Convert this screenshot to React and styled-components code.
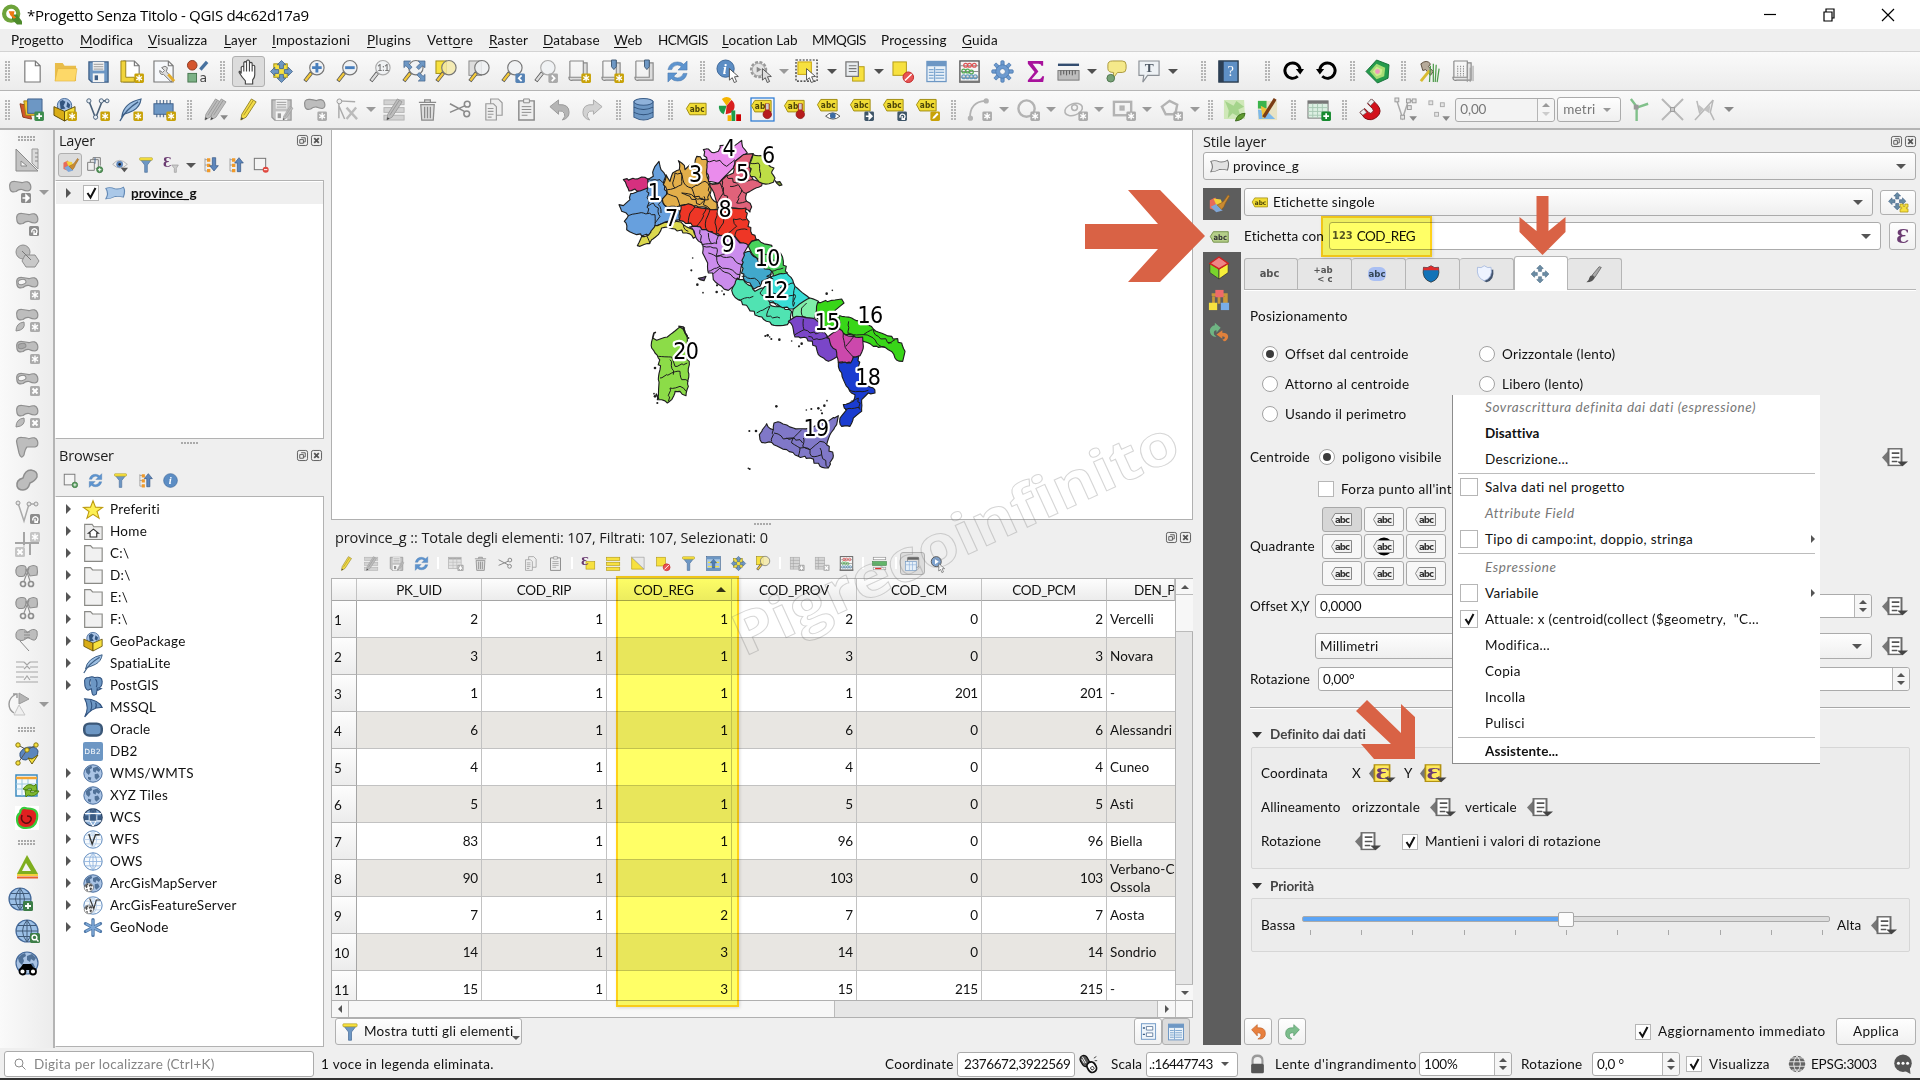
import React from "react";
import styled, { createGlobalStyle, css } from "styled-components";

const Global = createGlobalStyle`
  * { box-sizing: border-box; }
  html, body { margin: 0; padding: 0; background: #f0f0f0; }
  body { font: 13.5px/1.2 Lato, "Noto Sans", sans-serif; color: #111; overflow: hidden; }
  svg { display: block; flex: none; overflow: visible; }
`;

/* ---------- icons ---------- */
const BLUE = "#6d97c4";
const DBLUE = "#415a75";

const Badge = ({ x = 15, y = 14, c = "#c8a208", k = "star" }) => (
  <g transform={`translate(${x} ${y})`}>
    <rect width="10" height="10" rx="1.5" fill={c} />
    {k === "star" && <path d="M5 1.5v7M2 3.2l6 3.6M8 3.2L2 6.8" stroke="#fff" strokeWidth="1.4" />}
    {k === "plus" && <path d="M5 2v6M2 5h6" stroke="#fff" strokeWidth="1.8" />}
    {k === "x" && <path d="M2.5 2.5l5 5M7.5 2.5l-5 5" stroke="#fff" strokeWidth="2" />}
    {k === "right" && <path d="M1.5 5h4M5 2l3 3-3 3z" stroke="#fff" strokeWidth="1.5" fill="#fff" />}
    {k === "lt" && <path d="M6.5 2L3.5 5l3 3" stroke="#fff" strokeWidth="1.8" fill="none" />}
    {k === "gt" && <path d="M3.5 2l3 3-3 3" stroke="#fff" strokeWidth="1.8" fill="none" />}
    {k === "rot" && <path d="M3 6.5A2.6 2.6 0 1 1 5.2 8M5 4.8v3.4h3" stroke="#fff" strokeWidth="1.4" fill="none" />}
    {k === "find" && <path d="M6.600 6.600L8.500 8.500M4.500 2a2.400 2.400 0 1 1 0 4.800 2.400 2.400 0 0 1 0-4.800" stroke="#fff" strokeWidth="1.4" fill="none" />}
    {k === "pen" && <path d="M2 8l1-2.5L7 1.5l1.5 1.5-4 4z" fill="#fff" />}
  </g>
);
const Mag = ({ grey, glass = "#eef1f3" }) => (
  <g>
    <path d="M9 13l-7 9" stroke="#555" strokeWidth="4" />
    <path d="M8.5 13.8l-6 7.6" stroke={grey ? "#ddd" : "#f3c93b"} strokeWidth="2.4" />
    <circle cx="14.5" cy="8" r="7.5" fill={glass} fillOpacity=".85" stroke={grey ? "#aaa" : "#777"} strokeWidth="1.2" />
  </g>
);
const Pencil = ({ grey }) => (
  <g>
    <path d="M5 17L15 1l5 3L9.500 20 4 23z" fill={grey ? "#bcbcbc" : "#f3dc47"} stroke={grey ? "#999" : "#8c7b1f"} strokeWidth=".9" />
    <path d="M7 18L17 2.500" stroke={grey ? "#999" : "#a99425"} strokeWidth="1" />
    <path d="M4 23l.6-3 2.200 1.500z" fill="#444" />
  </g>
);
const Blob = ({ f = "#bdbdbd", s = "#8e8e8e", hole }) => (
  <g>
    <path d="M2 9Q0 1 7 1.500q4 .5 7 1.200Q21 0 22.500 5t-2.500 6q-3 0-6-1.500-3-.5-6 2Q3 13 2 9z" fill={f} stroke={s} strokeWidth="1.200" />
    {hole && <ellipse cx="7" cy="6" rx="4" ry="2.600" fill={hole} stroke={s} transform="rotate(-12 7 6)" />}
  </g>
);
const Tag = ({ y = 2, f = "#f1dc35", s = "#a08c10", t = "#4b4308" }) => (
  <g>
    <path d={`M.5 ${y + 6}L4 ${y + 0.5}H21v12H4z`} fill={f} stroke={s} strokeWidth="1" />
    <text x="4" y={y + 9.500} fontSize="8.600" fontWeight="700" fill={t} fontFamily="DejaVu Sans Condensed, DejaVu Sans, sans-serif" textLength="15.500">abc</text>
  </g>
);
const Globe = ({ f = "#a9c3e4", s = "#44699a", land = true, cls = "#33557f" }) => (
  <g>
    <circle cx="12" cy="12" r="11" fill={f} stroke={s} strokeWidth="1.200" />
    {land ? (
      <path d="M3 7q3-4 7-5l1 3-3 2 1 3-2 4-3-3-1-4zm9-2l5-2 4 4-2 3-3-2-1 3-3-2zm2 8l4-1 2 4-4 4-2-3zM6 16l4 1-1 4-3-2z" fill={cls} opacity=".75" />
    ) : (
      <path d="M1 12h22M3 6.500h18M3 17.500h18M12 1v22M12 1q-9 11 0 22M12 1q9 11 0 22" stroke={cls} fill="none" strokeWidth="1" />
    )}
  </g>
);
const Funnel = () => (
  <g>
    <path d="M3 3h18l-7 9v11h-4V12z" fill={BLUE} stroke="#4d709b" />
    <rect x="2.500" y="1" width="19" height="4" rx="1" fill="#f7e13f" stroke="#a08c10" strokeWidth=".7" />
  </g>
);
const Refresh = ({ c = "#5d94cf" }) => (
  <g fill={c} stroke="#3e6ea5" strokeWidth=".5">
    <path d="M2 10Q4 2 12 2q4 0 6.500 2.500L22 1v9.500h-9.500l3.500-3.500q-2-2-4.500-1.700Q7 6 6 10z" />
    <path d="M22 14q-2 8-10 8-4 0-6.500-2.500L2 23v-9.500h9.500L8 17q2 2 4.500 1.700Q17 18 18 14z" />
  </g>
);
const Page = ({ s = "#777", f = "#fff" }) => <path d="M4 1h11l5 5v17H4zM15 1v5h5" fill={f} stroke={s} strokeWidth="1.200" />;
const Cursor = ({ x = 11, y = 9, f = "#fff" }) => (
  <path transform={`translate(${x} ${y})`} d="M0 0v12l3-2.500 2 5 2.500-1-2.200-5 4-.3z" fill={f} stroke="#444" strokeWidth=".9" />
);
const Ruled = ({ s = "#888", f = "#dcdcdc" }) => (
  <path d="M3 1h14v2h4v18H6q-4 1-4-3h15V1M3 1v17" fill={f} stroke={s} strokeWidth="1.200" />
);
const Scissors = ({ c = "#8a8a8a" }) => (
  <g stroke={c} fill="none" strokeWidth="1.600">
    <path d="M1 6l15 8M1 15l16-7" />
    <circle cx="19" cy="6.500" r="3" /><circle cx="18.500" cy="16.500" r="3" />
  </g>
);
const Trash = ({ c = "#8a8a8a" }) => (
  <g stroke={c} fill="#ddd" strokeWidth="1.300">
    <path d="M5 7h14l-1 16H6zM3 4.500h18M9 4V2h6v2" /><path d="M9 9v12M12 9v12M15 9v12" />
  </g>
);
const Copy = ({ c = "#999" }) => (
  <g fill="#eee" stroke={c} strokeWidth="1.200">
    <path d="M9 1h8l4 4v13H9z" /><path d="M4 6h8l3 3v14H4zM6 11h6M6 14h6M6 17h6M6 20h4" />
  </g>
);
const Paste = ({ c = "#8a8a8a" }) => (
  <g fill="#eee" stroke={c} strokeWidth="1.500">
    <path d="M4 3h16v20H4z" /><path d="M9 1h6v4H9zM7 9h10M7 12h10M7 15h10M7 18h6" strokeWidth="1" />
  </g>
);
const Rows = ({ c = "#d2d2d2", s = "#b4b4b4" }) => (
  <g fill={c} stroke={s}><rect x="1" y="2" width="21" height="5" /><rect x="1" y="10" width="21" height="5" /><rect x="1" y="18" width="21" height="5" /></g>
);
const Floppy = ({ c = BLUE, s = "#3e5f86" }) => (
  <g>
    <path d="M2 2h20v21H5l-3-3z" fill={c} stroke={s} strokeWidth="1.300" />
    <rect x="6" y="2" width="12" height="9" fill="#f0f0f0" /><path d="M7 4.500h10M7 7h10M7 9.500h10" stroke="#999" />
    <rect x="6" y="14" width="12" height="9" fill="#f4f4f4" /><rect x="8" y="16" width="3.500" height="5" fill={s} />
  </g>
);
const Arrows4 = ({ c = BLUE }) => (
  <g fill={c} stroke="#3f5f86" strokeWidth=".8">
    {[0, 90, 180, 270].map((a) => <path key={a} transform={`rotate(${a} 12 12)`} d="M12 .5l4.500 4.500h-2.500v4h-4V5H7.500z" />)}
  </g>
);
const GreyStar = <Badge c="#ababab" />;
const Cut = () => (
  <g fill="#bdbdbd" stroke="#8e8e8e" strokeWidth="1.100">
    <path d="M1 9Q0 2 6 1.500T11 6q0 4-2 6-7 2-8-3zM14 3q5-3 8 0 1 5 0 8l-7 1-3-6z" />
    <path d="M9 17L14 4M15 17L11 5" /><circle cx="8" cy="20" r="2.500" fill="none" strokeWidth="1.700" /><circle cx="16" cy="20" r="2.500" fill="none" strokeWidth="1.700" />
  </g>
);
const Elbow = ({ children }) => <g fill="none" stroke="#b3b3b3" strokeWidth="2.500">{children}{<g stroke="none">{GreyStar}</g>}</g>;
const PkgBox = () => (
  <g><circle cx="12" cy="8" r="7.500" fill="#a9c3e4" stroke="#44699a" /><path d="M7 4l3-2 3 2-2 4 2 3-5 1zM15 4l3 3-1 4-3-2z" fill="#33557f" /><path d="M1 9l11 5v10L1 18z" fill="#d9ad16" stroke="#5e4b08" /><path d="M23 9l-11 5v10l11-6z" fill="#f7e13f" stroke="#5e4b08" /></g>
);
const Quill = () => (
  <g><path d="M3 19Q5 5 23 1q-1 8-8 12-6 3-10 4z" fill="#9dbfe2" stroke="#3d5f86" strokeWidth="1.200" /><path d="M1 24Q7 12 20 4" fill="none" stroke="#3d5f86" strokeWidth="1.400" /></g>
);
const Pin = () => (
  <g><path d="M15 6v7a4.500 4.500 0 1 0 4 0V6z" fill="#b71c1c" stroke="#7a1010" strokeWidth=".6" /><path d="M15.500 6h3v6h-3z" fill="#ccc" /></g>
);
const Eps = ({ x, y, size }) => <text x={x} y={y} fontSize={size} fontWeight="700" fontFamily="DejaVu Serif, serif" fill="#6b3c72">Ɛ</text>;

const ICONS = {
  newFile: <Page />,
  open: <><path d="M1 3h8l2 3h12v16H1z" fill="#e9bd4a" /><path d="M4 9h20l-2 13H1z" fill="#fdd868" stroke="#e0b13a" strokeWidth=".6" /></>,
  save: <Floppy />,
  layout: <><Page /><path d="M4 1H1v22h14v-5H6V1z" fill="#f1d43c" stroke="#9c8415" /><Badge /></>,
  layouts: <><path d="M1 1h15l5 5v17H1zM16 1v5h5" fill="#f6f8fb" stroke="#777" strokeWidth="1.200" /><path d="M9 8q4-3 6 0l-1 4 7 8-2 3-8-8q-4 1-4-4l3 2 2-2z" fill="#ddd" stroke="#777" /><path d="M16 15l6 7" stroke="#e4ad2b" strokeWidth="3" /></>,
  style: <><circle cx="6.500" cy="5.500" r="5" fill="#d4552d" stroke="#8d3a20" /><path d="M15 10L22 2" stroke="#47719f" strokeWidth="3.500" /><rect x="2" y="14" width="9" height="9" fill="#7cb286" stroke="#47764f" /><text x="14" y="23" fontSize="13" fill="#444" fontFamily="DejaVu Sans">a</text></>,
  hand: <path d="M5 14V8q1.500-2 2.500 0V3.500q1.300-2 2.600 0V2q1.500-2 2.800 0v2q1.500-1.600 2.600 0v2.500q2-1.200 2.500.5v8q0 3-2 5v4H9v-3q-3-3-6-8 0-3 2 1zM7.500 8v4M10.100 4v8M12.900 3v9M15.500 6v6" fill="#fff" stroke="#444" strokeWidth="1.100" />,
  panSel: <><rect x="4" y="4" width="14" height="14" fill="#f7e13f" stroke="#a08c10" /><Arrows4 /></>,
  zin: <><Mag /><path d="M14.500 3v10M9.500 8h10" stroke="#487fbd" strokeWidth="3" /></>,
  zout: <><Mag /><path d="M9.500 8h10" stroke="#487fbd" strokeWidth="3" /></>,
  z11: <><Mag grey /><text x="8.500" y="11.500" fontSize="9" fontWeight="700" fill="#777">1:1</text></>,
  zfull: <><Mag /><g fill={BLUE} stroke="#3f5f86" strokeWidth=".7"><path d="M2 1h7L6.500 3.500l4 4-2.500 2.500-4-4L2 8zM24 1v7l-2.500-2-4 4L15 7.500l4-4L17 1zM24 22h-7l2.500-2.500-4-4 2.500-2.500 4 4L24 15z" /></g></>,
  zsel: <><rect x="1" y="1" width="11" height="13" fill="#f7e13f" stroke="#a08c10" /><Mag glass="#f3e9a8" /></>,
  zlayer: <><rect x="1" y="1" width="13" height="15" fill="#ddd" stroke="#888" /><Mag /></>,
  zlast: <><Mag /><Badge c="#5683b5" k="lt" /></>,
  znext: <><Mag grey /><Badge c="#aaa" k="gt" /></>,
  newMap: <><Ruled /><Badge /></>,
  newBook: <><Ruled /><path d="M12 0h5v7l-2.500 3L12 7z" fill={BLUE} stroke={DBLUE} /><Badge /></>,
  showBook: <><Ruled /><path d="M12 0h5v7l-2.500 3L12 7z" fill={BLUE} stroke={DBLUE} /></>,
  refresh: <Refresh />,
  info: <><circle cx="10" cy="9" r="9" fill="#5c8dc4" stroke="#3b6596" /><text x="7" y="14.500" fontSize="15" fontStyle="italic" fontWeight="700" fontFamily="Liberation Serif" fill="#fff">i</text><Cursor x="14" /></>,
  action: <><circle cx="10" cy="10" r="7.500" fill="#ddd" stroke="#999" strokeWidth="3" strokeDasharray="3 1.500" /><circle cx="10" cy="10" r="6.500" fill="#e4e4e4" stroke="#aaa" /><path d="M8 7l5 3-5 3z" fill="#888" /><Cursor x="14" f="#ddd" /></>,
  select: <><rect x="0" y="0" width="22" height="22" fill="none" stroke="#222" strokeDasharray="2 1.500" strokeWidth="1.200" /><rect x="2" y="2" width="14" height="13" fill="#f7e13f" stroke="#c8a208" /><Cursor x="11" y="9" /></>,
  selForm: <><rect x="9" y="7" width="12" height="15" fill="#f7e13f" stroke="#b39a14" /><path d="M2 2h13v15H2zM5 6h8M5 9h8M5 12h8" fill="#e8ecef" stroke="#777" strokeWidth="1.300" /></>,
  desel: <><rect x="1" y="2" width="14" height="14" fill="#f7e13f" stroke="#b39a14" /><circle cx="17" cy="18" r="5.500" fill="#e85454" stroke="#c02525" /><path d="M13.500 21.500l7-7" stroke="#fff" strokeWidth="1.500" /></>,
  table: <><rect x="2" y="1.500" width="20" height="21" fill="#e9f1f8" stroke="#6d97c4" strokeWidth="1.300" /><rect x="2" y="1.500" width="20" height="5" fill={BLUE} /><path d="M4 10h5M4 13h5M4 16h5M4 19h5M11 10h9M11 13h9M11 16h9M11 19h9M10 7v15" stroke="#7fa8d0" strokeWidth="1.300" /></>,
  abacus: <><rect x="2" y="1" width="20" height="22" fill="#f6f6f6" stroke="#555" strokeWidth="1.400" /><path d="M2 6h20M2 12h20M2 18h20" stroke="#888" />{[[8, 5, "#d55"], [12, 5, "#d55"], [17, 5, "#d55"], [6, 11, "#5a5"], [10, 11, "#5a5"], [14, 12, "#5a5"], [6, 17, "#69b"], [10, 17, "#69b"], [14, 17, "#69b"], [18, 17, "#69b"]].map(([x, y, c], i) => <circle key={i} cx={x} cy={y + 0.5} r="2" fill="none" stroke={c} strokeWidth="1.300" />)}<path d="M1 22.500h22" stroke="#777" strokeWidth="2" /></>,
  gear: <g fill="#6d9bd0" stroke="#4a78ae" strokeWidth=".8">{[0, 45, 90, 135, 180, 225, 270, 315].map((a) => <rect key={a} x="10.300" y=".8" width="3.400" height="6" rx="1" transform={`rotate(${a} 12 12)`} />)}<circle cx="12" cy="12" r="7" /><circle cx="12" cy="12" r="3" fill="#f6f6f6" /></g>,
  sigma: <path d="M4 1h16v5h-2q0-2-3-2H9l6 8-7 8h7q3 0 4-3h2l-1 6H4v-2l7-8.500L4 4z" fill="#a8129c" />,
  ruler: <><path d="M1 5h22" stroke="#334d70" strokeWidth="2.500" /><rect x="1" y="11" width="22" height="10" fill="#bdbdbd" stroke="#777" /><path d="M4 11v5M7 11v4M10 11v5M13 11v4M16 11v5M19 11v4" stroke="#555" /></>,
  tip: <><path d="M8 1h10q4 0 4 4v4q0 4-4 4h-5l-5 7 1-7Q3 13 3 9V5q0-4 5-4z" fill="#f5e98a" stroke="#a9983d" /><circle cx="6" cy="19" r="4" fill="#76a176" stroke="#4e754e" /></>,
  textNote: <><path d="M1 1h21v15H10l-5 7 1-7H1z" fill="#eef2f5" stroke="#8a8f95" strokeWidth="1.200" /><text x="7" y="13" fontSize="14" fontWeight="700" fontFamily="Liberation Serif" fill="#4a5560">T</text></>,
  help: <><rect x="2" y="1" width="20" height="22" fill="#5e8fc4" stroke="#26384b" strokeWidth="1.400" /><rect x="2" y="1" width="5" height="22" fill="#2c3f54" /><text x="11" y="17" fontSize="15" fontFamily="Liberation Serif" fill="#fff">?</text></>,
  redo: <><path d="M17.500 17A8 8 0 1 1 20 10" fill="none" stroke="#000" strokeWidth="3" /><path d="M15.500 9.500H24L20 15z" /></>,
  undo: <><path d="M6.500 17A8 8 0 1 0 4 10" fill="none" stroke="#000" strokeWidth="3" /><path d="M8.500 9.500H0L4 15z" /></>,
  penta: <><path d="M11 0l13 5-1 14-11 5L0 12z" fill="#259b4c" stroke="#17713a" /><path d="M11 4l9 4-1 9-8 3-7-8z" fill="#a6dc75" /><path d="M11 7l6 3-1 5-5 2-4-5z" fill="#cdec8e" /><circle cx="12" cy="12" r="2.500" fill="#f09ac0" /></>,
  hammer: <><path d="M3 4q6-5 10 0l-2 3 5 5-3 4-5-6-3 1z" fill="#b6aa9a" stroke="#5b4c3c" /><path d="M3 22L12 11" stroke="#d8bb2f" strokeWidth="3" /><path d="M13 6l-1 17M16 4l0 19M19 5l-1 18M22 9l-2 14" stroke="#4e9b4b" strokeWidth="1.300" /></>,
  scroll: <><Ruled f="#e4e4e4" /><path d="M7 6v11M10 6v11M13 6v11" stroke="#888" strokeDasharray="1.500 1" /><path d="M17 5v18M20 8v15M23 6v16" stroke="#999" /></>,
  /* second bar */
  dsm: <><path d="M0 6l9 2 3 14-9-2z" fill="#d1562a" stroke="#8b3a1b" /><path d="M4 3h12v15H6z" fill="#f0c22e" stroke="#a08212" /><path d="M8 1h15v15H8z" fill={BLUE} stroke="#41618b" /><Badge c="#3e8d4e" k="plus" /></>,
  gpkg: <PkgBox />,
  gpkgNew: <><PkgBox /><Badge /></>,
  shp: <><path d="M3 3l7 18L17 3h4" fill="none" stroke="#4a6078" strokeWidth="1.600" /><g fill="#e6edf4" stroke="#4a6078"><circle cx="3" cy="3" r="2.200" /><circle cx="10" cy="20" r="2.200" /><circle cx="16" cy="3" r="2.200" /><circle cx="22" cy="3" r="2" /></g><Badge /></>,
  feather: <Quill />,
  featherNew: <><Quill /><Badge /></>,
  mem: <><path d="M5 2v18M8.500 2v18M12 2v18M15.500 2v18M19 2v18" stroke="#5c7796" strokeWidth="1.300" /><rect x="2" y="6" width="20" height="11" fill="#6d97c4" stroke="#41618b" /><Badge /></>,
  pens: <><g transform="translate(-3 0)"><Pencil grey /></g><g transform="translate(3 0)"><Pencil grey /></g><path d="M17 18h8l-4 5z" fill="#888" /></>,
  pencil: <Pencil />,
  saveEdit: <><Floppy c="#c2c2c2" s="#999" /><g transform="translate(11 8) scale(.65)"><Pencil grey /></g></>,
  addPoly: <><Blob />{GreyStar}</>,
  vertex: <><path d="M3 3v18M3 3l17 1M3 8l6 14" stroke="#aaa" strokeWidth="1.500" fill="none" /><circle cx="3.500" cy="3.500" r="2.500" fill="#eee" stroke="#999" /><path d="M11 10l11 12M21 10L11 22" stroke="#bbb" strokeWidth="2.500" /></>,
  multiEdit: <><Rows /><Pencil grey /></>,
  trash: <Trash />, cut: <Scissors />, copy: <Copy />, paste: <Paste />,
  undoG: <path d="M2 9l9-7v5q11-1 11 8 0 6-7 8 4-4 2-7-1-3-6-2.500V17z" fill="#b5b5b5" stroke="#999" />,
  redoG: <path d="M22 9l-9-7v5Q2 6 2 15q0 6 7 8-4-4-2-7 1-3 6-2.500V17z" fill="#d2d2d2" stroke="#aaa" />,
  db: <g fill="#6d97c4" stroke="#3c5f8a" strokeWidth="1.100"><path d="M2 4v16q10 6 20 0V4z" /><ellipse cx="12" cy="4" rx="10" ry="3.500" fill="#8fb2da" /><path d="M2 9.500q10 5 20 0M2 15q10 5 20 0" fill="none" stroke="#2f5079" /></g>,
  tag: <g transform="translate(1 3)"><Tag /></g>,
  diagram: <><path d="M9 8L1 8A8 8 0 0 0 6 17z" fill="#1d9c49" /><path d="M9 8L4 1a8 8 0 0 1 10 0z" fill="#f5b400" /><path d="M9 8l5-6a8 8 0 0 1-2 14l-4 1z" fill="#d81f1f" /><path d="M14 13h4v11h-4z" fill="#1d9c49" /><path d="M10 18h4v6h-4z" fill="#f5b400" /><path d="M19 17h5v7h-5z" fill="#c00" /></>,
  tagPinBox: <><rect x="0" y="0" width="24" height="24" fill="none" stroke="#2a7ad4" strokeWidth="1.300" /><Tag y={2} /><Pin /></>,
  tagPin: <><Tag y={2} /><Pin /></>,
  tagEye: <><Tag y={1} /><path d="M9 19q7-7 15 0-7 6-15 0z" fill="#fff" stroke="#555" /><circle cx="16.500" cy="18.500" r="3" fill="#3d6ba3" /></>,
  tagMove: <><Tag y={1} /><Badge c="#3e5568" k="right" /></>,
  tagRot: <><Tag y={1} /><Badge c="#3e5568" k="rot" /></>,
  tagEdit: <><Tag y={1} /><Badge k="pen" /></>,
  curve: <Elbow><path d="M2 21Q2 4 18 3" strokeWidth="1.800" /><circle cx="2.500" cy="21" r="1.500" /><circle cx="19" cy="3" r="1.500" /></Elbow>,
  circ: <Elbow><circle cx="11" cy="11" r="8.500" /></Elbow>,
  ellip: <Elbow><ellipse cx="10" cy="12" rx="9.500" ry="6" transform="rotate(-20 10 12)" strokeWidth="1.600" /><circle cx="11" cy="10" r="3" strokeWidth="1.600" /></Elbow>,
  rect: <Elbow><rect x="2" y="4" width="18" height="14" /><rect x="9" y="9" width="3" height="3" /></Elbow>,
  poly: <Elbow><path d="M3 9l8-6 8 4-2 10H7z" /></Elbow>,
  map1: <><path d="M1 2h21l1 20H1z" fill="#cfe8b8" /><path d="M2 3l9 5 3-5 8 6-6 3 3 9-9-5-5 5 1-8z" fill="#a5d48c" /><path d="M13 24q2-8 10-8-1 7-10 8z" fill="#5f9b2f" stroke="#3b6a1a" /></>,
  map2: <><path d="M2 3h20v20H2z" fill="#e8e3c4" /><path d="M2 3h9v8H2z" fill="#3bb44b" /><path d="M2 12l10 2 8 8H3z" fill="#7db9ea" /><path d="M5 8l9 5-7 9z" fill="#f0c23b" /><path d="M8 20L20 1" stroke="#7b3d14" strokeWidth="3.500" /></>,
  addTable: <><rect x="1" y="3" width="21" height="18" fill="#dcefe2" stroke="#777" /><rect x="1" y="3" width="21" height="3" fill="#777" /><path d="M1 10h21M1 14h21M1 18h21M6 6v15M11 6v15M16 6v15" stroke="#a8c9b4" /><Badge c="#168a2f" k="plus" /></>,
  magnet: <><path d="M13 1l6 6q6 7 0 12.500T6 21L1 15l5-4 4 4q2 2 4 0t0-4l-5-5z" fill="#d3121c" stroke="#7e0a10" /><path d="M13 1l3 3-4 4-3-3zM1 15l4-3.500 3 3.500L4 18z" fill="#eee" stroke="#666" strokeWidth=".7" /></>,
  vtx2: <><path d="M3 3l6 18L15 3h6" fill="none" stroke="#aaa" strokeWidth="1.600" /><g fill="#e5e5e5" stroke="#999"><rect x="1" y="0" width="4" height="4" /><rect x="7" y="18" width="4" height="4" /><rect x="13" y="1" width="4" height="4" /><rect x="19" y="1" width="4" height="4" /><rect x="14" y="8" width="4" height="4" /></g><path d="M16 19h8l-4 5z" fill="#888" /></>,
  vtx3: <g fill="#e5e5e5" stroke="#aaa"><rect x="2" y="3" width="4" height="4" /><rect x="14" y="5" width="4" height="4" /><rect x="8" y="15" width="4" height="4" /><path d="M16 19h8l-4 5z" fill="#888" stroke="none" /></g>,
  topo: <><path d="M9 24V9L3 1M9 10l12-4" fill="none" stroke="#80c08a" strokeWidth="2.500" /><rect x="6" y="7" width="5" height="5" fill="#999" /></>,
  crossG: <><path d="M1 1l22 22M23 1L1 23" stroke="#b8b8b8" strokeWidth="2" /><rect x="10" y="10" width="4" height="4" fill="#ccc" stroke="#999" /></>,
  selfG: <><path d="M1 23L20 2M20 2l-3 13 4 8M3 3l3 13" fill="none" stroke="#b8b8b8" strokeWidth="1.600" /><path d="M5 7l6 5 6-5-1 9-6-4-4 4z" fill="#c2c2c2" /></>,
  /* left bar */
  setsq: <><path d="M1 1v22h22z" fill="#c4c4c4" stroke="#8a8a8a" /><path d="M6 13v5h6z" fill="#f4f4f4" stroke="#8a8a8a" /><path d="M17 1h6v20l-6-6z" fill="#dadada" stroke="#999" /><path d="M20 5h3M20 9h3M20 13h3" stroke="#888" /></>,
  blobMove: <><Blob /><Badge x={13} y={13} c="#8c8c8c" k="right" /></>,
  blobRot: <><Blob /><Badge x={14} c="#8c8c8c" k="rot" /></>,
  simplify: <><circle cx="8" cy="8" r="7" fill="#bdbdbd" stroke="#8e8e8e" /><path d="M10 11h10l4 6-4 6H11l-4-6z" fill="#c9c9c9" stroke="#8e8e8e" /><path d="M7 7l9 9" stroke="#777" /></>,
  ringAdd: <><Blob hole="#f6f6f6" />{GreyStar}</>,
  partAdd: <><Blob /><path d="M1 23q0-8 8-9 2 8-8 9z" fill="#bdbdbd" stroke="#8e8e8e" />{GreyStar}</>,
  ringFill: <><Blob hole="#a9a9a9" />{GreyStar}</>,
  ringDel: <><Blob hole="#f6f6f6" /><Badge c="#ababab" k="x" /></>,
  partDel: <><Blob /><path d="M1 23q0-8 8-9 2 8-8 9z" fill="#bdbdbd" stroke="#8e8e8e" /><Badge c="#ababab" k="x" /></>,
  reshape: <path d="M2 8Q0 1 7 1.500t7 1.200Q21 0 22.500 5t-2.500 6h-8q-2 2-3 8-3 5-5-2z" fill="#bdbdbd" stroke="#8e8e8e" strokeWidth="1.200" />,
  offset: <path d="M2 18q-1-6 6-8 2-8 8-8 7 1 6 7-2 4-7 6-2 7-7 7-5 0-6-4z" fill="#bdbdbd" stroke="#8e8e8e" strokeWidth="1.500" />,
  vtxRot: <><path d="M3 3l6 18L14 4h8" fill="none" stroke="#aaa" strokeWidth="1.500" /><g fill="#e5e5e5" stroke="#999"><circle cx="3" cy="3" r="2" /><circle cx="14" cy="4" r="2" /><circle cx="21" cy="4" r="2" /></g><Badge c="#8c8c8c" k="rot" /></>,
  trim: <><path d="M9 0v13M0 11h24M15 11v12" stroke="#a5a5a5" strokeWidth="2" /><path d="M9 13v10" stroke="#bbb" strokeDasharray="2 2" /><Badge x={15} y={0} c="#c5c5c5" /><Badge x={0} y={15} c="#c5c5c5" k="x" /></>,
  cutF: <Cut />,
  merge: <><path d="M1 9Q0 2 6 1.500T12 5q6-6 10-2 1 5-1 8t-8-2q-5 5-9 3-3-1-3-3z" fill="#bdbdbd" stroke="#8e8e8e" /><path d="M9 4h6M9 7h6M9 10h6M5 13l9 10" stroke="#888" /></>,
  mergeA: <g fill="none" stroke="#a5a5a5" strokeWidth="1.200"><path d="M1 2h8M15 2h8M1 7h8M15 7h8M1 12h22M1 17h8M15 17h8M1 22h22M9 2l3 3 3-3M9 9l3-3 3 3M9 20l3-4 3 4" /></g>,
  rotSym: <><path d="M8 2Q1 6 1 12t5 9M5 2h4v4" fill="none" stroke="#999" strokeWidth="1.400" /><path d="M11 1l10 6-10 5z" fill="#b5b5b5" stroke="#999" /><path d="M11 13l6 10H6z" fill="#f0f0f0" stroke="#c5c5c5" /></>,
  topology: <><path d="M5 11Q8 5 15 5t8 4q0 8-7 8-2-2-5 1-7 0-6-7z" fill="#5c86bd" stroke="#30527f" /><path d="M3 3l9 5 9-5M3 21L12 8" fill="none" stroke="#555" /><g fill="#f7e13f" stroke="#8a7a12"><circle cx="3" cy="3" r="2.200" /><circle cx="12" cy="8" r="2.200" /><circle cx="21" cy="3" r="2.200" /><circle cx="3" cy="21" r="2.200" /></g><path d="M13 16l4 6 6-9-6 4z" fill="#f7e13f" stroke="#6b5e0e" /></>,
  tblRef: <><rect x="1" y="1" width="21" height="21" fill="#f4fafe" stroke="#3b8bc0" strokeWidth="1.500" /><path d="M1 4h21" stroke="#f3a433" strokeWidth="2.500" /><path d="M1 10h21M1 15h21M7 5v17M13 5v17" stroke="#9dc8e0" /><path d="M8 15q5-7 11-3l2-2 1 7h-7l2-2q-4-2-5 1zM24 17q-4 7-11 4l-2 2-1-7h7l-2 2q4 2 5-1z" fill="#7fba2f" stroke="#4d8213" /></>,
  swirl: <><rect x="0" y="0" width="24" height="24" fill="#fff" /><path d="M5 7Q6 0 12 2.500 24 2 22 13q-2 9-11 9T2 13q0-4 3-6z" fill="#e02020" stroke="#36cc3c" strokeWidth="2.200" /><path d="M12 10q5 0 4 4-2 4-6 3-5-2-3-8" fill="none" stroke="#5a0f0f" strokeWidth="1.600" /></>,
  dtri: <><path d="M12 0L2 19h21z" fill="#7fae1e" /><path d="M11 8l5 8H7z" fill="#f4f4f4" /><path d="M2 20h21" stroke="#f5c400" strokeWidth="1.500" /><path d="M2 22.500h21" stroke="#e8622c" strokeWidth="2" /></>,
  globeAdd: <><Globe land={false} f="#9cc0e6" cls="#405a78" /><Badge c="#3c7d47" k="plus" /></>,
  globeFind: <><Globe land={false} f="#9cc0e6" cls="#405a78" /><Badge c="#3c7d47" k="find" /></>,
  globeBino: <><Globe /><path d="M4 19l4-6h8l4 6z" fill="#000" /><circle cx="7.500" cy="20.500" r="3" fill="#fff" stroke="#000" strokeWidth="1.800" /><circle cx="18" cy="20.500" r="3" fill="#fff" stroke="#000" strokeWidth="1.800" /></>,
  /* docks */
  brush: <><path d="M2 8l6-3 5 8-3 7-8-3z" fill="#e86a5a" /><path d="M6 6l8 1 3 8-5 5z" fill="#f5d23b" /><path d="M3 15l6 6 7-2-7-7z" fill="#7fa7d8" /><path d="M10 13q5-2 7-4l5-7 1.500 1.500L19 11q-1 4-4 7z" fill="#c98a32" stroke="#8d5b17" strokeWidth=".7" /></>,
  addGroup: <g fill="none" stroke="#777" strokeWidth="1.400"><path d="M1 8h10v12H1zM5 8V4h12v13h-4M9 4V1h11v12" /><path d="M12 1v9" stroke="#41618b" /><circle cx="19" cy="19" r="4.500" fill="#579a5d" stroke="#3e7a45" /><path d="M19 16.500v5M16.500 19h5" stroke="#fff" /></g>,
  eye: <><path d="M1 11q10-12 22 0-11 11-22 0z" fill="#eee" stroke="#999" /><circle cx="11.500" cy="11" r="5" fill="#5c86bd" /><circle cx="11.500" cy="11" r="2" fill="#222" /><path d="M13 16h11l-5.500 7z" fill="#555" /></>,
  funnel: <Funnel />,
  epsF: <><Eps x={0} y={15} size={18} /><path d="M13 12h10l-3 5v6h-3v-6z" fill="#ccc" stroke="#999" /></>,
  expand: <><path d="M3 2v19h5M3 4h5M3 12h5" fill="none" stroke="#999" strokeWidth="1.300" /><path d="M6 2h5v5H6zM6 10h5v5H6zM6 18h5v5H6z" fill="#f09a2a" /><path d="M14 1h5v12h4l-6.500 8L10 13h4z" fill="#5c86bd" stroke="#30527f" /></>,
  collapse: <><path d="M3 2v19h5M3 4h5M3 12h5" fill="none" stroke="#999" strokeWidth="1.300" /><path d="M6 2h5v5H6zM6 10h5v5H6zM6 18h5v5H6z" fill="#f09a2a" /><path d="M14 22h5V9h4l-6.500-8L10 9h4z" fill="#5c86bd" stroke="#30527f" /></>,
  removeL: <><rect x="2" y="2" width="17" height="17" fill="#f4f4f4" stroke="#777" strokeWidth="1.500" /><circle cx="19" cy="19" r="4.500" fill="#e0483f" /><path d="M16.500 19h5" stroke="#fff" strokeWidth="1.500" /></>,
  addL: <><rect x="2" y="2" width="17" height="17" fill="#f4f4f4" stroke="#777" strokeWidth="1.500" /><circle cx="19" cy="19" r="4.500" fill="#579a5d" stroke="#3e7a45" /><path d="M19 16.500v5M16.500 19h5" stroke="#fff" strokeWidth="1.300" /></>,
  infoR: <><circle cx="12" cy="12" r="11" fill="#5c8dc4" stroke="#3b6596" /><text x="9" y="18" fontSize="17" fontStyle="italic" fontWeight="700" fontFamily="Liberation Serif" fill="#fff">i</text></>,
  layerPoly: <path d="M1 4q5-3 11 1 6 1 10-3 3 6 0 17-5-2-10-1-5 4-11 4 4-9 0-18z" fill="#aac8e8" stroke="#6389b5" strokeWidth="1.400" />,
  layerGrey: <path d="M1 4q5-3 11 1 6 1 10-3 3 6 0 17-5-2-10-1-5 4-11 4 4-9 0-18z" fill="#e2e2e2" stroke="#777" strokeWidth="1.400" />,
  star: <path d="M12 1l3 8 8.500.3-6.700 5.200 2.500 8.500-7.300-5-7.300 5 2.500-8.500L.5 9.300 9 9z" fill="#fdf053" stroke="#bd9b10" strokeWidth="1.300" />,
  home: <><path d="M2 3h9l2 3h10v16H2z" fill="#ececec" stroke="#8a8a86" strokeWidth="1.300" /><path d="M12.500 9l6 5h-2v5h-8v-5h-2z" fill="#fff" stroke="#333" strokeWidth="1.400" /></>,
  folder: <path d="M2 2h7l2.500 3H23v17H2z" fill="#f1f1f1" stroke="#8a8a86" strokeWidth="1.400" />,
  elephant: <path d="M2 8Q1 2 7 2q4-2 7 0 9-2 9 5 0 7-4 8l3 1-4 2-1-2-1 7q-4 3-5-1l-1-6-4 2Q2 17 2 8zM9 4q-2 5 0 9M15 4q3 4 1 10" fill={BLUE} stroke="#30527f" strokeWidth="1.300" />,
  mssql: <path d="M2 1q17 1 21 11-12-1-21 12 6-12 0-23zM9 3q3 7 0 13M15 6q2 3 0 7" fill={BLUE} stroke="#30527f" strokeWidth="1.300" />,
  oracle: <rect x="1.500" y="4.500" width="21" height="15" rx="6" fill={BLUE} stroke="#3c5878" strokeWidth="3" />,
  db2: <><rect x="0" y="0" width="24" height="24" rx="2.500" fill={BLUE} /><text x="1.500" y="15" fontSize="9" fill="#fff" fontFamily="DejaVu Sans" textLength="20">DB2</text></>,
  globe: <Globe />,
  globeD: <><circle cx="12" cy="12" r="11" fill="#8db0d8" stroke="#2d4566" strokeWidth="1.500" /><path d="M2 7h20M2 16.500h20M12 1q-8 11 0 22M12 1q8 11 0 22" fill="none" stroke="#fff" strokeWidth="1.300" /><path d="M8 8h8v8H8zM8 1q4-1 8 0v5H8zM1.500 9h5v6h-5zM17.500 9h5v6h-5z" fill="#2d4c74" opacity=".85" /></>,
  globeW: <Globe land={false} f="#f6fafd" s="#5b87bb" cls="#8bb0dc" />,
  globeV: <><Globe land={false} f="#f6fafd" s="#5b87bb" cls="#b3cbe8" /><path d="M7 5l4 13L15 6h5" fill="none" stroke="#333" strokeWidth="1.600" /></>,
  arcMap: <><Globe /><g transform="translate(1 11) scale(.5)"><Globe f="#fff" s="#222" cls="#111" /></g></>,
  arcFeat: <><Globe land={false} f="#f6fafd" s="#5b87bb" cls="#b3cbe8" /><path d="M8 3l5 13L16 5h5" fill="none" stroke="#333" strokeWidth="1.400" /><g transform="translate(1 11) scale(.5)"><Globe f="#fff" s="#222" cls="#111" /></g></>,
  geonode: <g stroke="#4d76a6" strokeWidth="4" strokeLinecap="round"><path d="M12 2v20M3 7l18 10M21 7L3 17" /><path d="M12 3v18M4 7.500l16 9M20 7.500l-16 9" stroke="#7da7d6" strokeWidth="2" /></g>,
  calc: <><rect x="8" y="9" width="14" height="12" fill="#f7e13f" stroke="#b39a14" /><Eps x={0} y={15} size={18} /></>,
  selAll: <Rows c="#f7e13f" s="#b39a14" />,
  invert: <><path d="M1 2v19h20z" fill="#f7e13f" stroke="#b39a14" /><path d="M1 2h20v19z" fill="#e8e8e8" stroke="#999" /></>,
  moveTop: <><rect x="1" y="1" width="22" height="22" fill="#a9c7e6" stroke="#41618b" /><path d="M1 3h22M1 21h22" stroke={BLUE} strokeWidth="4" /><path d="M3 10h18M3 17h18" stroke="#f7e13f" strokeWidth="2" /><path d="M12 5l5 6h-3v8h-4v-8H7z" fill="#4e7db2" stroke="#30527f" strokeWidth=".7" /></>,
  newField: <><rect x="1" y="2" width="20" height="18" fill="#e2e2e2" stroke="#aaa" /><path d="M1 4h20" stroke="#aaa" strokeWidth="3" /><path d="M1 10h20M1 15h20M8 2v18M14 2v18" stroke="#bbb" />{GreyStar}</>,
  colDel: <><rect x="2" y="2" width="15" height="19" fill="#d5d5d5" stroke="#aaa" /><path d="M7 2v19M2 7h15M2 12h15M2 17h15" stroke="#a5a5a5" /><Badge c="#b5b5b5" k="x" /></>,
  colNew: <><rect x="2" y="2" width="15" height="19" fill="#d5d5d5" stroke="#aaa" /><path d="M7 2v19M2 7h15M2 12h15M2 17h15" stroke="#a5a5a5" />{GreyStar}</>,
  condF: <><rect x="2" y="2" width="20" height="4" fill="#fff" stroke="#888" /><rect x="1" y="9" width="22" height="6" fill="#61b56a" stroke="#3f8748" /><rect x="2" y="18" width="20" height="4" fill="#fff" stroke="#999" /><path d="M5 20h10" stroke="#d33" strokeWidth="2" /></>,
  dock: <><rect x="4" y="2" width="18" height="16" rx="2" fill="#ddd" stroke="#777" /><path d="M4 4h18" stroke="#666" strokeWidth="4" /><rect x="1" y="9" width="17" height="14" fill="#e7f0f8" stroke="#6d97c4" /><path d="M1 14h17M7 9v14M12 9v14" stroke="#8bb0dc" /></>,
  actZoom: <><circle cx="10" cy="9" r="8" fill="#7fa3cf" stroke="#555" strokeWidth="1.500" /><path d="M8 5l6 4-6 4z" fill="#fff" /><Cursor x="14" y="12" /></>,
  form: <><rect x="2" y="1" width="20" height="22" fill="#eef5fb" stroke="#6d97c4" strokeWidth="1.300" /><path d="M9 5h9v5H9zM9 14h9v5H9z" fill="#fff" stroke="#3e5f86" /><path d="M4 7h3M4 16h3" stroke="#3e5f86" strokeWidth="2" /></>,
  /* style dock */
  cube: <g stroke="#333" strokeWidth=".8"><path d="M2 7l10 6v11L2 17z" fill="#79d32c" /><path d="M22 7l-10 6v11l10-7z" fill="#f6ef3a" /><path d="M12 0l10 7-10 6L2 7z" fill="#ef8585" stroke="#c22" strokeWidth="1.500" /></g>,
  blocks: <><path d="M4 6h16v10M12 6v10M6 8v8M18 8v8" fill="none" stroke="#c79638" strokeWidth="3" /><rect x="8" y="1" width="9" height="8" fill="#f06a6a" /><rect x="1" y="15" width="9" height="8" fill="#f7e13f" /><rect x="14" y="15" width="9" height="8" fill="#79aee8" /></>,
  history: <><path d="M7 1l7 6-5 6v-3q-4 0-3 5l3 3q-8 0-8-8 1-5 6-6z" fill="#6fb583" /><path d="M9 15l7-5v3q7 0 7 5-1 5-5 5l-2-2q3 0 3-3l-3-1v3z" fill="#e0813c" /></>,
  tagG: <g transform="translate(1 4)"><Tag f="#b5cf8a" s="#6c8a3f" t="#333" /></g>,
  tagS: <g transform="translate(1 4)"><Tag /></g>,
  eps: <Eps x={4} y={20} size={22} />,
  engine: <><g transform="translate(-1 -1) scale(.95)"><Arrows4 c="#668aa3" /></g><path d="M14 14h4v3h2v-3h4v4h-2v2h2v4H14v-4h2v-2h-2z" fill="#f7e13f" stroke="#b39a14" /></>,
  place: <g fill="#6a8ba3" stroke="#48687f" strokeWidth=".6">{[0, 90, 180, 270].map((a) => <path key={a} transform={`rotate(${a} 12 12)`} d="M12 0l4.500 4.500-2.500 1v3h-4v-3l-2.500-1z" />)}</g>,
  shield: <><path d="M2 3q5 2 10-2 5 4 10 2 3 16-10 20Q-1 19 2 3z" fill="#1273b8" stroke="#333" /><path d="M2 3q5 2 10-2 5 4 10 2l.4 4H1.600z" fill="#df2c2c" /></>,
  shadow: <><path d="M6 6q5 2 9-1 5 2 8 1 2 14-9 17Q5 20 6 6z" fill="#44556e" /><path d="M2 3q5 2 9-2 5 4 9 2 3 14-9 18Q0 17 2 3z" fill="#edf3ff" stroke="#9db3dc" /></>,
  paint: <><path d="M20 1l3 1-9 14-4-3z" fill="#aaa" stroke="#555" /><path d="M10 13l4 3q-2 7-12 7 4-3 4-6 1-4 4-4z" fill="#555" /></>,
  ovr: <><path d="M0 12l6-9v18z" fill="#777" /><rect x="6" y="1" width="12" height="21" fill="#fff" stroke="#6b6b6b" strokeWidth="1.800" /><path d="M9 6.500h7M9 12h7M9 17h5" stroke="#555" strokeWidth="2" /><path d="M14 17h10l-5 6z" fill="#444" /></>,
  ovrE: <><path d="M0 12l5-9v18z" fill="#777" /><rect x="5" y="1" width="14" height="21" fill="#ffe95c" stroke="#b39212" strokeWidth="1.500" /><Eps x={6} y={18.5} size={19} /><path d="M14.500 17h10l-5 6z" fill="#444" /></>,
  undoO: <path d="M1 9l9-8v5q13-1 13 9 0 7-7 9h-5q6-3 5-7-1-4-6-3v5z" fill="#e8803e" stroke="#bd5c22" />,
  redoGr: <path d="M23 9l-9-8v5Q1 5 1 15q0 7 7 9h3q-5-3-4-7 1-4 7-3v5z" fill="#7cbd8c" stroke="#4f9362" />,
  lock: <><path d="M5 12V7q0-6 7-6t7 6v5" fill="none" stroke="#999" strokeWidth="3" /><rect x="3" y="11" width="18" height="12" rx="2" fill="#555" /></>,
  globeDark: <><circle cx="12" cy="12" r="11" fill="#666" /><path d="M1 9h22M1 15h22M12 1q-9 11 0 22M12 1q9 11 0 22M4 4h16M5 20h14" fill="none" stroke="#eee" strokeWidth="1.200" /></>,
  chat: <><circle cx="12" cy="11" r="10.500" fill="#555" /><path d="M14 20l7 4-1-9z" fill="#555" /><g fill="#fff"><circle cx="6.500" cy="11" r="1.800" /><circle cx="12" cy="11" r="1.800" /><circle cx="17.500" cy="11" r="1.800" /></g></>,
  mouse: <><g transform="rotate(-30 12 12)"><rect x="6" y="0" width="9" height="14" rx="4.500" fill="#555" stroke="#111" strokeWidth="1.500" /><path d="M10.500 1v9M8.500 3v6" stroke="#fff" /><rect x="9" y="11" width="10" height="13" rx="5" fill="#fff" stroke="#111" strokeWidth="2.200" /><circle cx="14" cy="19" r="2" fill="none" stroke="#111" /></g><path d="M19 5l3-2M20 8h3" stroke="#222" /></>,
  search: <g fill="none" stroke="#8a8a8a" strokeWidth="2"><circle cx="10" cy="10" r="8" /><path d="M16 16l7 7" /></g>,
  float: <g fill="none" stroke="#555" strokeWidth="2"><rect x="1" y="1" width="22" height="22" rx="4" /><path d="M9 6h9v9h-4M6 10h8v8H6z" /></g>,
  close: <g fill="none" stroke="#555" strokeWidth="2"><rect x="1" y="1" width="22" height="22" rx="4" /><path d="M7 7l10 10M17 7L7 17" strokeWidth="4" /></g>,
};
const Icon = ({ n, s = 24, w }) => <svg width={w || s} height={s} viewBox="0 0 24 24" preserveAspectRatio="none">{ICONS[n]}</svg>;

/* ---------- shell ---------- */
const Window = styled.div`width: 1920px; height: 1080px; display: flex; flex-direction: column; background: #efefef; position: relative; overflow: hidden;`;
const TitleBar = styled.div`height: 29px; background: #fff; display: flex; align-items: center; padding: 0 25px 0 2px; gap: 5px; font: 15px "Open Sans", "Noto Sans", sans-serif; letter-spacing: -0.3px; color: #000;`;
const Spacer = styled.div`flex: 1;`;
const WinButtons = styled.div`display: flex; gap: 46px;`;
const MenuBar = styled.div`height: 23px; border-bottom: 1px solid #d3d3d3; display: flex; align-items: center; padding-left: 11px;`;
const MenuItem = styled.div`width: ${(p) => p.$w}px; white-space: nowrap; letter-spacing: ${(p) => p.$ls || 0.15}px; u { text-underline-offset: 2px; }`;
const ToolBar = styled.div`height: 39px; flex: none; border-bottom: ${(p) => (p.$last ? 2 : 1)}px solid #b4b4b4; background: linear-gradient(#fafafa, #ececec); display: flex; align-items: center;`;
const Slot = styled.div`
  width: ${(p) => p.$w || 33}px; height: ${(p) => p.$h || 31}px; flex: none; display: flex; align-items: center; justify-content: center;
  ${(p) => p.$on && css`background: #dcdcdc; border: 1px solid #b0b0b0; border-radius: 3px;`}
`;
const GripBox = styled.div`
  width: ${(p) => p.$w}px; flex: none; display: flex; justify-content: center;
  &::after { content: ""; width: 5px; height: 20px; background: radial-gradient(circle at 1px 1px, #b5b5b5 0.8px, transparent 1px) 0 0 / 3px 3px; }
`;
const GripH = styled.div`
  height: ${(p) => p.$h}px; flex: none; display: flex; justify-content: center; align-items: center;
  &::after { content: ""; width: ${(p) => p.$w || 17}px; height: ${(p) => (p.$thin ? 2 : 5)}px; background: radial-gradient(circle at 1px 1px, #aaa 0.8px, transparent 1px) 0 0 / 3px 3px; }
`;
const Tri = styled.i`
  width: 0; height: 0; display: block; flex: none; border: ${(p) => p.$s || 5}px solid transparent;
  ${(p) => (p.$d === "r" ? `border-left: ${(p.$s || 5) * 1.1}px solid ${p.$c || "#555"}; border-right: 0;`
    : p.$d === "l" ? `border-right: ${(p.$s || 5) * 1.1}px solid ${p.$c || "#555"}; border-left: 0;`
    : p.$d === "u" ? `border-bottom: ${(p.$s || 5) * 1.1}px solid ${p.$c || "#555"}; border-top: 0;`
    : `border-top: ${(p.$s || 5) * 1.1}px solid ${p.$c || "#555"}; border-bottom: 0;`)}
`;
const Strip = styled.div`height: 2px; background: #333;`;

/* numbers are gripper widths, "v"/"V" are enabled/disabled drop arrows, "_n" is blank space */
const BAR1 = [15.5, "newFile", "open", "save", "layout", "layouts", "style", 18, "!hand", "panSel", "zin", "zout", "z11", "zfull", "zsel", "zlayer", "zlast", "znext", "newMap", "newBook", "showBook", "refresh", 17, "info", "action", "V", "select", "v", "selForm", "v", "desel", "table", "abacus", "gear", "sigma", "ruler", "v", "tip", "textNote", "v", "_15", 17, "help", "_14", 17, "redo", "_2", "undo", 17, "penta", 19, "hammer", "scroll"];
const BAR2A = [14.5, "dsm", "gpkgNew", "shp", "featherNew", "mem", 19, "pens", "pencil", "saveEdit", "addPoly", "vertex", "V", "multiEdit", "trash", "cut", "copy", "paste", "undoG", "redoG", 18, "db", 20, "tag", "diagram", "tagPinBox", "tagPin", "tagEye", "tagMove", "tagRot", "tagEdit", 19, "curve", "V", "circ", "V", "ellip", "V", "rect", "V", "poly", "V", 16, "map1", "map2", 18, "addTable", 19, "magnet", "_2", "vtx2", "vtx3"];
const BAR2B = ["topo", "crossG", "selfG"];

const tools = (list) => list.map((t, i) => {
  if (typeof t === "number") return <GripBox key={i} $w={t} />;
  if (t[0] === "_") return <Slot key={i} $w={+t.slice(1)} />;
  if (t === "v" || t === "V") return <Slot key={i} $w={14.8}><Tri $s={5} $c={t === "v" ? "#505050" : "#9a9a9a"} /></Slot>;
  if (t[0] === "!") return <Slot key={i} $on $w={33}><Icon n={t.slice(1)} s={25} /></Slot>;
  return <Slot key={i}><Icon n={t} s={23} /></Slot>;
});

const MENU = [["P", "r", "ogetto", 69], ["", "M", "odifica", 68], ["", "V", "isualizza", 76], ["", "L", "ayer", 48], ["", "I", "mpostazioni", 95, 0.25], ["", "P", "lugins", 60, 0.25], ["Vett", "o", "re", 62, 0.25], ["", "R", "aster", 54, 0.25], ["", "D", "atabase", 71], ["", "W", "eb", 44], ["HCMGIS", "", "", 64, -0.5], ["", "L", "ocation Lab", 90, 0.05], ["MMQGIS", "", "", 69, -0.5], ["Pro", "c", "essing", 81, 0.25], ["", "G", "uida", 60, 0.2]];

/* ---------- main areas ---------- */
const Main = styled.div`flex: 1; min-height: 0; display: flex;`;
const SideTools = styled.div`width: 55px; flex: none; border-right: 2px solid #b4b4b4; background: linear-gradient(90deg, #fafafa, #ececec); padding-top: 3px;`;
const SideSlot = styled.div`height: 32px; display: flex; align-items: center; padding-left: ${(p) => (p.$drop ? 8 : 15)}px; gap: 7px;`;
const SIDE1 = ["setsq", "blobMove", "blobRot", "simplify", "ringAdd", "partAdd", "ringFill", "ringDel", "partDel", "reshape", "offset", "vtxRot", "trim", "cutF", "cutF", "merge", "mergeA", "rotSym"];
const LeftDocks = styled.div`width: 276px; flex: none; display: flex; flex-direction: column; padding: 1px 7px 1px 0;`;
const DockTitle = styled.div`
  height: ${(p) => p.$h || 20}px; flex: none; display: flex; align-items: center; gap: 3px; padding: 0 ${(p) => p.$pr ?? 2}px 2px ${(p) => p.$pl ?? 4}px; font: 14.500px "Open Sans", "Noto Sans", sans-serif;
  letter-spacing: ${(p) => p.$ls || -0.2}px; color: #1c1c1c;
`;
const MiniBar = styled.div`height: ${(p) => p.$h || 29}px; flex: none; display: flex; align-items: center; padding: 0 0 1px ${(p) => p.$pl ?? 3}px;`;
const Sep = styled.div`width: ${(p) => p.$w || 8}px; height: 12px; flex: none; background: linear-gradient(#fff, #fff) center / 2px 100% no-repeat;`;
const Tree = styled.div`height: ${(p) => (p.$h ? p.$h + "px" : "auto")}; flex: ${(p) => (p.$h ? "none" : 1)}; background: #fff; border: 1px solid #b2b2b2; border-left-color: #fff; padding-top: 1px;`;
const TreeRow = styled.div`height: 22px; display: flex; align-items: center; padding-left: 10px; background: ${(p) => (p.$sel ? "#efefef" : "none")}; letter-spacing: 0.26px;`;
const TreeArrow = styled.div`width: 17px; display: flex; visibility: ${(p) => (p.$hide ? "hidden" : "visible")};`;
const TreeText = styled.span`margin-left: 7px; ${(p) => p.$b && "font-weight: 700; text-decoration: underline; margin-left: 6px; letter-spacing: 0.05px;"}`;
const CheckBox = styled.div`
  width: ${(p) => p.$s || 16}px; height: ${(p) => p.$s || 16}px; flex: none; background: #fff; border: 1px solid #b6b6b6; display: flex; align-items: center; justify-content: center;
`;
const Check = ({ s, on = true }) => (
  <CheckBox $s={s}>{on && <svg width="11" height="12" viewBox="0 0 11 12"><path d="M1.500 6l3 4.500L9.500 1" fill="none" stroke="#111" strokeWidth="2" /></svg>}</CheckBox>
);

const BROWSER = [["star", "Preferiti"], ["home", "Home"], ["folder", "C:\\"], ["folder", "D:\\"], ["folder", "E:\\"], ["folder", "F:\\"], ["gpkg", "GeoPackage"], ["feather", "SpatiaLite"], ["elephant", "PostGIS"], ["mssql", "MSSQL", 1], ["oracle", "Oracle", 1], ["db2", "DB2", 1], ["globe", "WMS/WMTS"], ["globe", "XYZ Tiles"], ["globeD", "WCS"], ["globeV", "WFS"], ["globeW", "OWS"], ["arcMap", "ArcGisMapServer"], ["arcFeat", "ArcGisFeatureServer"], ["geonode", "GeoNode"]];

const DockButtons = () => <><Spacer /><Icon n="float" s={11} /><Icon n="close" s={11} /></>;

/* ---------- map ---------- */
const rough = (str, closed) => {
  const v = str.trim().split(/[ ,]+/).map(Number);
  const pts = [];
  for (let i = 0; i < v.length; i += 2) pts.push([v[i], v[i + 1]]);
  const out = [];
  const n = pts.length;
  for (let i = 0; i < (closed ? n : n - 1); i++) {
    const [a, b] = [pts[i], pts[(i + 1) % n]];
    out.push(a);
    const len = Math.hypot(b[0] - a[0], b[1] - a[1]);
    const k = Math.max(1, Math.round(len / 10));
    for (let j = 1; j < k; j++) {
      const t = j / k;
      const h = Math.sin((a[0] + b[0]) * 1.7 + (a[1] + b[1]) * 2.3 + Math.abs(t - 0.5) * 37) * 3;
      out.push([a[0] + (b[0] - a[0]) * t + h, a[1] + (b[1] - a[1]) * t - h]);
    }
  }
  if (!closed) out.push(pts[n - 1]);
  return out.map((p) => p.map((c) => c.toFixed(1)).join(",")).join(" ");
};
const REGIONS = [
  ["#67a0de", "237,125 243,150 257,170 250,190 260,225 248,240 262,262 300,275 300,300 262,305 245,312 225,318 223,335 205,347 170,345 140,330 133,305 145,288 125,275 117,255 130,258 150,240 152,222 180,212 203,205 203,178 220,170 218,158 225,140"],
  ["#d6307f", "130,180 165,178 185,172 203,178 203,205 180,214 165,208 147,214 140,198"],
  ["#e2ae4a", "258,165 270,185 278,160 298,150 295,123 305,130 315,150 330,135 345,130 350,110 385,125 380,165 392,200 390,225 412,250 412,268 385,268 355,262 320,255 290,262 262,262 247,238 262,222 250,195"],
  ["#ea8cec", "370,90 385,88 395,98 415,95 420,78 460,80 485,62 488,82 502,100 485,110 465,125 460,145 440,165 425,180 415,192 385,185 380,160 382,125 372,108"],
  ["#e0627a", "465,125 490,105 520,102 510,130 512,165 520,180 548,185 545,198 500,220 500,245 515,262 510,277 495,268 440,262 415,265 410,248 402,220 390,200 390,190 415,192 440,168 460,160"],
  ["#bede46", "518,105 545,108 560,125 582,145 575,160 585,175 580,188 550,192 530,178 512,170 510,130"],
  ["#7c9c2c", "585,183 600,186 606,196 598,198"],
  ["#dbd84e", "172,378 185,350 205,347 225,318 245,312 262,308 290,305 310,315 340,330 350,350 340,356 320,340 285,328 262,322 245,325 235,345 215,360 208,372 180,380"],
  ["#ee3626", "298,302 303,258 325,252 345,262 385,268 412,270 440,262 498,265 502,300 512,335 535,362 515,365 505,378 480,368 465,350 420,348 385,335 350,320 310,305"],
  ["#cb8cec", "328,322 350,320 385,335 415,348 465,352 480,370 505,378 492,400 495,425 485,435 480,465 470,495 445,512 425,500 400,480 398,460 385,460 383,430 368,400 365,370 345,345"],
  ["#48d35c", "505,380 515,365 535,360 565,375 595,395 610,425 622,460 605,472 580,470 575,455 555,450 540,420 515,400"],
  ["#41a8cc", "492,400 510,395 530,415 555,448 575,455 572,472 545,485 540,500 522,508 510,490 490,475 485,440"],
  ["#50e3b2", "455,512 472,475 490,480 515,500 525,515 550,505 560,495 580,520 565,535 570,555 600,560 635,575 632,600 622,615 575,615 535,590 505,565 475,540"],
  ["#38dcd6", "575,470 620,460 645,500 688,535 680,550 660,555 640,568 600,560 570,548 565,530 570,500"],
  ["#80eeaa", "640,568 660,552 690,535 715,545 712,570 705,595 675,592 640,594"],
  ["#7a46c8", "625,605 650,590 705,598 720,612 735,640 745,655 775,690 770,712 745,725 715,705 708,680 680,655 645,652 640,630"],
  ["#38d618", "713,548 755,542 785,538 792,550 765,572 785,590 830,603 880,628 935,650 965,670 975,695 968,725 945,715 925,690 915,683 880,680 850,665 810,645 780,635 775,622 745,625 725,610 710,594"],
  ["#cc48ac", "740,652 778,628 790,640 820,650 848,652 850,680 840,708 820,712 815,730 775,728 768,690 750,668"],
  ["#1a3cd0", "775,728 812,730 820,712 836,710 838,750 850,790 880,805 885,820 865,820 845,840 845,875 820,895 810,920 785,920 780,895 800,870 790,855 820,845 825,825 805,805 785,760"],
  ["#8078c8", "538,945 560,912 580,930 582,910 600,908 640,925 690,925 740,905 775,888 770,915 750,945 740,975 760,1008 745,1045 720,1040 690,1015 655,1010 620,990 575,968 555,970 540,960"],
  ["#8cdc48", "215,685 218,655 230,662 262,652 300,622 315,640 322,660 320,700 328,735 325,800 318,828 300,815 285,815 275,840 262,850 232,840 235,780 240,750 235,715 225,700"],
];
const BORDERS = ["203,178 225,180 240,180 252,190", "203,205 205,240 203,280", "203,260 220,250 235,265 240,290 225,310", "248,240 235,255 243,280", "145,288 190,280 225,285 225,318",
  "262,210 285,205 305,195 305,160 285,160 278,190 285,205", "300,150 312,190 335,205 345,235 385,240 388,200 375,185 335,205", "262,222 290,232 300,262", "305,220 330,230 360,255 375,240 335,225 305,220", "372,230 370,255 390,268",
  "382,125 420,122 440,140 465,120", "395,195 420,190 430,220 412,250", "425,180 430,215 450,250", "450,200 475,195 485,210 470,250 500,245", "440,168 470,190 520,180", "485,210 500,222", "535,130 540,175", "510,130 535,130",
  "345,262 330,280 325,312", "378,265 365,300 350,320", "390,270 378,300 380,330", "415,268 405,310 410,340", "440,262 430,310 415,335", "498,300 460,298 470,320 440,345", "502,330 470,332 465,350",
  "210,372 200,348", "310,315 325,335", "360,330 365,370", "385,340 395,372 365,375", "415,348 410,372 395,372", "370,380 410,385 408,410 385,400", "408,410 440,400 445,375", "410,410 460,415 485,435", "385,455 420,440 410,410", "420,440 480,465", "400,462 420,445 478,480",
  "548,395 575,420 600,430", "575,455 610,445", "578,462 560,470 580,478", "485,470 530,480 540,495", "600,505 640,490", "580,520 600,540 645,525 640,560", "645,500 640,560", "475,540 520,530", "530,580 570,560 560,590 600,595", "550,505 540,520 580,545 600,560", "670,592 665,565 680,550",
  "670,598 672,630 645,645", "672,630 690,640 730,640", "685,650 700,660 745,655", "778,590 780,630", "806,605 805,645", "805,640 850,645 878,630", "850,645 870,650 890,670 915,683", "880,630 895,650 935,670", "925,672 945,660",
  "790,640 800,690 820,712", "798,680 822,650", "808,810 840,815 865,812", "812,845 835,835 840,870", "795,870 840,865", "580,930 575,965", "582,940 610,958 640,955 665,930", "640,955 635,970 660,985 655,1010", "670,955 668,980 690,990 720,965 740,975", "660,985 690,990 695,1010 725,1005 720,985", "725,1005 745,1045", "620,955 660,960 668,970",
  "235,710 275,712 285,740 322,730", "240,775 275,760 300,755 305,780 325,785", "270,720 280,765", "265,845 270,805 300,800 318,815"];
const SPOTS = [[338, 415], [334, 452], [352, 495], [369, 519], [411, 497], [410, 517], [426, 514], [432, 524], [740, 522], [757, 512], [556, 649], [563, 647], [569, 652], [574, 658], [598, 660], [635, 664], [657, 680], [589, 860], [679, 871], [694, 868], [715, 866], [723, 872], [726, 881], [733, 858], [741, 843], [508, 934], [528, 934], [505, 1046], [509, 1048], [225, 745], [222, 822], [232, 850], [225, 830], [313, 625], [325, 655], [665, 672]];
const LABELS = [[1, 222, 242], [3, 346, 188], [4, 446, 108], [5, 487, 184], [6, 565, 130], [7, 274, 319], [8, 434, 293], [9, 443, 396], [10, 562, 440], [12, 586, 534], [15, 741, 632], [16, 870, 611], [18, 863, 796], [19, 708, 949], [20, 317, 719]];
const MapLabel = styled.text`font: 69px "DejaVu Sans Condensed", "DejaVu Sans", sans-serif; text-anchor: middle; paint-order: stroke; stroke: #fff; stroke-width: 13px; stroke-linejoin: round; fill: #000; letter-spacing: -2px;`;
const Center = styled.div`width: 862px; flex: none; display: flex; flex-direction: column;`;
const Canvas = styled.div`height: 390px; flex: none; background: #fff; border: 1px solid #b0b0b0; border-top: 0; overflow: hidden;`;
const Italy = () => (
  <svg width="860" height="389" viewBox="-744 31 2580 1167" preserveAspectRatio="xMinYMin">
    <g stroke="#1e1e1e" strokeWidth="3.400" strokeLinejoin="round">
      {REGIONS.map(([f, p], i) => <polygon key={i} fill={f} points={rough(p, true)} />)}
      <g fill="none" strokeWidth="3">{BORDERS.map((b, i) => <polyline key={i} points={rough(b)} />)}</g>
      <path d="M355,476L365,474L378,470L372,483L360,480z" fill="#6a4a88" />
      <path d="M295,620L310,622L316,640L322,652M218,655L222,640L228,638M228,822L236,838" fill="none" strokeWidth="5" />
    </g>
    {SPOTS.map(([x, y], i) => <circle key={i} cx={x} cy={y} r={2.5 + (i % 3) * 0.7} fill="#1e1e1e" />)}
    {LABELS.map(([t, x, y]) => <MapLabel key={t} x={x} y={y}>{t}</MapLabel>)}
  </svg>
);

/* ---------- attribute table ---------- */
const TableBox = styled.div`height: 423px; flex: none; display: flex; border: 1px solid #b0b0b0; background: #fff; position: relative;`;
const Grid = styled.div`flex: 1; overflow: hidden;`;
const GRow = styled.div`display: grid; grid-template-columns: 25px repeat(6, 125px) 68px; height: ${(p) => p.$h || 37}px; background: ${(p) => (p.$alt ? "#e8e6e2" : "#fff")};`;
const HCell = styled.div`display: flex; align-items: center; justify-content: center; padding: 2px ${(p) => (p.$sorted ? 11 : 0)}px 0 0; border-right: 1px solid #c2c2c2; border-bottom: 1px solid #a5a5a5; background: linear-gradient(#fdfdfd, #ececec); overflow: hidden; position: relative; white-space: nowrap; ${(p) => p.$left && "justify-content: flex-start; padding-left: 27px;"} letter-spacing: -0.3px;`;
const SortMark = styled.div`position: absolute; right: 5px; top: 8px;`;
const RowHead = styled.div`border-right: 1px solid #a5a5a5; border-bottom: 1px solid #b5b5b5; background: linear-gradient(#fdfdfd, #ececec); display: flex; align-items: center; padding: 2px 0 0 2px; letter-spacing: -0.3px;`;
const Cell = styled.div`border-right: 1px solid #c2c2c2; border-bottom: 1px solid #c2c2c2; display: flex; align-items: center; justify-content: ${(p) => (p.$left ? "flex-start" : "flex-end")}; padding: 0 3px; line-height: 18px; white-space: pre; overflow: hidden; letter-spacing: -0.2px; ${(p) => p.$left && "border-right: 0; letter-spacing: 0.1px;"}`;
const VScroll = styled.div`width: 17px; flex: none; border-left: 1px solid #b5b5b5; background: #e6e6e6; display: flex; flex-direction: column;`;
const HScroll = styled.div`height: 17px; flex: none; border: 1px solid #b0b0b0; border-top: 0; background: #e6e6e6; display: flex;`;
const SBtn = styled.div`width: ${(p) => p.$w || 17}px; height: ${(p) => p.$h || 16}px; flex: none; background: #f7f7f7; display: flex; align-items: center; justify-content: center; ${(p) => p.$b};`;
const Highlight = styled.div`position: absolute; left: ${(p) => p.$x}px; top: ${(p) => p.$y}px; width: ${(p) => p.$w}px; height: ${(p) => p.$h}px; background: #ffff66; border: 2px solid #ffd21a; mix-blend-mode: multiply; box-shadow: 1px 1px 3px #0002; z-index: 3;`;
const BottomRow = styled.div`height: 27px; flex: none; display: flex; padding: 0 3px 0 4px;`;
const Button = styled.div`width: ${(p) => p.$w}px; height: ${(p) => p.$h || 27}px; flex: none; border: 1px solid #b0b0b0; border-radius: 3px; background: ${(p) => (p.$on ? "#dcdcdc" : "linear-gradient(#fefefe, #f1f1f1)")}; display: flex; align-items: center; justify-content: ${(p) => (p.$start ? "flex-start" : "center")}; gap: 5px; padding-left: ${(p) => (p.$start ? 5 : 0)}px; position: relative; letter-spacing: 0.28px; white-space: nowrap;`;
const Corner = styled.div`position: absolute; right: 1px; bottom: 4px;`;
const DATA = [[2, 1, 1, 2, 0, 2, "Vercelli"], [3, 1, 1, 3, 0, 3, "Novara"], [1, 1, 1, 1, 201, 201, "-"], [6, 1, 1, 6, 0, 6, "Alessandri"], [4, 1, 1, 4, 0, 4, "Cuneo"], [5, 1, 1, 5, 0, 5, "Asti"], [83, 1, 1, 96, 0, 96, "Biella"], [90, 1, 1, 103, 0, 103, "Verbano-C\nOssola"], [7, 1, 2, 7, 0, 7, "Aosta"], [14, 1, 3, 14, 0, 14, "Sondrio"], [15, 1, 3, 15, 215, 215, "-"]];
const TBAR = ["pencil", "multiEdit", "saveEdit", "refresh", 9, "newField", "trash", "cut", "copy", "paste", 8.5, "calc", "selAll", "invert", "desel", "funnel", "moveTop", "panSel", "zsel", 8, "colNew", "colDel", "abacus", 8, "condF", 8, "!dock", "actZoom"];

/* ---------- style dock ---------- */
const StyleDock = styled.div`flex: 1; display: flex; flex-direction: column; padding: 1px 4px 3px 10px;`;
const Combo = styled.div`
  ${(p) => (p.$w ? `width: ${p.$w}px; flex: none;` : "flex: 1;")} height: ${(p) => p.$h || 28}px; border: 1px solid #ababab; border-radius: 3px; background: ${(p) => (p.$white ? "#fff" : "linear-gradient(#fefefe, #efefef)")};
  display: flex; align-items: center; gap: 4px; padding: 0 ${(p) => p.$pr ?? 9}px 0 ${(p) => p.$pl ?? 6}px; letter-spacing: ${(p) => p.$ls ?? 0.2}px; color: ${(p) => p.$c || "#111"}; white-space: nowrap; overflow: hidden;
`;
const DockBody = styled.div`flex: 1; display: flex; margin-top: 7px; min-height: 0;`;
const DarkStrip = styled.div`width: 38px; flex: none; background: #5d5d5d; margin-right: 3px;`;
const StripItem = styled.div`height: 32px; display: flex; align-items: center; justify-content: center; padding-right: 6px; background: ${(p) => (p.$on ? "#efefef" : "none")};`;
const Form = styled.div`flex: 1; min-width: 0; display: flex; flex-direction: column;`;
const Line = styled.div`display: flex; align-items: center; height: ${(p) => p.$h || 26}px; margin-top: ${(p) => p.$mt || 0}px; padding-left: ${(p) => p.$pl || 0}px; padding-right: ${(p) => p.$pr || 0}px; flex: none; white-space: nowrap; letter-spacing: 0.27px;`;
const Lbl = styled.span`width: ${(p) => p.$w}px; flex: none; white-space: nowrap; letter-spacing: ${(p) => p.$ls ?? 0.15}px; ${(p) => p.$b && "font-weight: 700; color: #444;"}`;
const Gap = styled.div`width: ${(p) => p.$w}px; flex: none;`;
const Tabs = styled.div`height: 34px; margin-top: 6px; flex: none; display: flex; align-items: flex-end; border-bottom: 1px solid #b5b5b5; box-shadow: 0 1px #fff;`;
const Tab = styled.div`width: 54px; height: ${(p) => (p.$on ? 34 : 31)}px; border: 1px solid #b5b5b5; border-left-width: ${(p) => (p.$first || p.$on ? 1 : 0)}px; border-radius: 3px 3px 0 0; border-bottom: 0; background: ${(p) => (p.$on ? "#fff" : "#e6e6e6")}; display: flex; align-items: center; justify-content: center; padding-right: 3px; margin-bottom: ${(p) => (p.$on ? -1 : 0)}px;`;
const TabText = styled.span`font: 700 11px/10px "DejaVu Sans Condensed", "DejaVu Sans", sans-serif; letter-spacing: 0; color: #555; text-align: right; white-space: pre; ${(p) => p.$small && "font-size: 9.5px; line-height: 9px;"} ${(p) => p.$halo && "color: #345; background: #a9bff3; border-radius: 6px; padding: 2px 1px; font-size: 9.5px;"}`;
const RadioDot = styled.span`
  width: 16px; height: 16px; flex: none; border-radius: 50%; border: 1px solid #a2a2a2; background: #fff; display: flex; align-items: center; justify-content: center; margin-right: 7px;
  &::after { content: ""; width: 8px; height: 8px; border-radius: 50%; background: ${(p) => (p.$on ? "#3c3c3c" : "transparent")}; }
`;
const RadioGrid = styled.div`display: grid; grid-template-columns: 217px 300px; grid-auto-rows: 30px; margin-top: 9px; padding-left: 18px; flex: none; letter-spacing: 0.27px;`;
const Radio = styled.div`display: flex; align-items: center;`;
const Quad = styled.div`display: grid; grid-template-columns: repeat(3, 40px); grid-auto-rows: 25px; gap: 2px; `;
const QBtn = styled.div`border: 1px solid #a8a8a8; border-radius: 3px; display: flex; align-items: center; justify-content: center; padding-right: 2px; background: ${(p) => (p.$on ? "#d6d6d6" : "#f7f7f7")};`;
const SpinBox = styled.div`${(p) => (p.$w ? `width: ${p.$w}px; flex: none;` : "flex: 1;")} height: ${(p) => p.$h || 24}px; border: 1px solid #ababab; border-radius: 3px; background: ${(p) => p.$bg || "#fff"}; color: ${(p) => p.$c || "#111"}; display: flex; align-items: center; padding-left: 4px; letter-spacing: -0.15px;`;
const SpinArrows = styled.div`margin-left: auto; width: 17px; height: 100%; border-left: 1px solid #b5b5b5; background: #f5f5f5; display: flex; flex-direction: column; align-items: center; justify-content: space-evenly; border-radius: 0 3px 3px 0;`;
const Spin = ({ children, dim, ...p }) => (
  <SpinBox {...p}>{children}<SpinArrows><Tri $d="u" $s={4.5} $c={dim ? "#999" : "#555"} /><Tri $s={4.5} $c={dim ? "#ccc" : "#555"} /></SpinArrows></SpinBox>
);
const Rule = styled.div`height: 2px; margin: 16px 6px 0; background: #a8a8a8; border-bottom: 1px solid #fff; flex: none;`;
const Group = styled.div`margin: 0 6px 0 7px; height: ${(p) => p.$h}px; flex: none; border: 1px solid #d6d6d6; border-radius: 2px; background: #ececec; padding-left: 9px;`;
const SliderWrap = styled.div`width: 528px; flex: none; display: flex; flex-direction: column; padding-top: 1px;`;
const Track = styled.div`height: 6px; border: 1px solid #ababab; border-radius: 2px; background: linear-gradient(90deg, #5ba4f5 49.500%, #dcdcdc 49.500%); display: flex; align-items: center; padding-left: 255px;`;
const Knob = styled.div`width: 16px; height: 15px; flex: none; background: #fcfcfc; border: 1px solid #a8a8a8; border-radius: 2px;`;
const Ticks = styled.div`display: flex; justify-content: space-between; padding: 0 7px 0 8px; margin-top: 8px;`;
const Tick = styled.i`width: 1px; height: 5px; background: #a8a8a8;`;

const Popup = styled.div`position: absolute; left: 1452px; top: 395px; width: 368px; height: 369px; background: #fff; border-left: 1px solid #8c8c8c; border-bottom: 1px solid #8c8c8c; z-index: 5; margin: 0; display: flex; flex-direction: column;`;
const PopItem = styled.div`
  height: 26px; flex: none; display: flex; align-items: center; padding: 0 5px 2px 7px; white-space: pre; letter-spacing: 0.33px;
  ${(p) => p.$head && "color: #777; font-style: italic; letter-spacing: 0.6px;"} ${(p) => p.$b && "font-weight: 700; letter-spacing: 0.1px;"}
`;
const PopMark = styled.div`width: 25px; flex: none;`;
const PopRule = styled.div`height: 2px; flex: none; margin: 0 5px; border-top: 1px solid #bcbcbc;`;
const Status = styled.div`height: 30px; flex: none; display: flex; align-items: center; padding: 2px 8px 0 4px;`;
const Field = styled.div`width: ${(p) => p.$w}px; height: ${(p) => p.$h || 25}px; flex: none; background: #fff; border: 1px solid #ababab; border-radius: 3px; display: flex; align-items: center; gap: 8px; padding-left: ${(p) => p.$pl ?? 6}px; color: ${(p) => p.$c || "#111"}; letter-spacing: ${(p) => p.$ls || 0}px; white-space: nowrap;`;
const Overlay = styled.svg`position: absolute; left: 0; top: 0; pointer-events: none; z-index: 6;`;
const Watermark = styled.text`font: 700 58px "Open Sans", sans-serif; fill: none; stroke: rgba(120, 120, 120, 0.3); stroke-width: 1px;`;

const POP = [
  ["Sovrascrittura definita dai dati (espressione)", "h"], ["Disattiva", "b"], ["Descrizione..."], null,
  ["Salva dati nel progetto", "c"], ["Attribute Field", "h"], ["Tipo di campo:int, doppio, stringa", "ca"], null,
  ["Espressione", "h"], ["Variabile", "ca"], ['Attuale: x (centroid(collect ($geometry,  "C...', "x"], ["Modifica..."], ["Copia"], ["Incolla"], ["Pulisci"], null, ["Assistente...", "b"],
];
const TagGrey = ({ ball }) => (
  <svg width="21" height="17" viewBox="0 0 21 17">
    {ball && <circle cx="11" cy="8.500" r="9" fill="#000" />}
    <path d="M.5 8.500L4 2.500H20.500v12H4z" fill="#f2f2f2" stroke="#888" />
    <text x="4" y="12" fontSize="9.500" fontWeight="700" fontFamily="DejaVu Sans Condensed" letterSpacing="0" textLength="15" fill="#333">abc</text>
  </svg>
);
const Override = ({ e }) => <Icon n={e ? "ovrE" : "ovr"} s={19} w={26} />;

export default function App() {
  return (
    <Window>
      <Global />
      <TitleBar>
        <svg width="20" height="21" viewBox="0 0 24 24"><circle cx="11" cy="11" r="8.500" fill="none" stroke="#6da33a" strokeWidth="5" /><path d="M12 12h6l6 8v4h-6l-6-6z" fill="#4d8a2b" /><path d="M8 8h7l-1 5 3 3-3 1-4-4z" fill="#ee7913" /></svg>
        <span>*Progetto Senza Titolo - QGIS d4c62d17a9</span>
        <Spacer />
        <WinButtons>
          {["M0 6.500h12", "M1 4h8v9H1zM3 4V1h8v9H9", "M0 1l12 12M12 1L0 13"].map((d) => <svg key={d} width="13" height="14"><path d={d} fill="none" stroke="#000" strokeWidth="1.200" /></svg>)}
        </WinButtons>
      </TitleBar>
      <MenuBar>{MENU.map(([a, u, b, w, ls]) => <MenuItem key={a + u + b} $w={w} $ls={ls}>{a}<u>{u}</u>{b}</MenuItem>)}</MenuBar>
      <ToolBar>{tools(BAR1)}</ToolBar>
      <ToolBar $last>
        {tools(BAR2A)}
        <Spin $w={100} $bg="#f3f3f3" $c="#777" dim>0,00</Spin><Gap $w={2} />
        <Combo $w={64} $h={25} $pl={5} $pr={9} $c="#777">metri<Spacer /><Tri $c="#999" $s={4.5} /></Combo><Gap $w={2} />
        {tools(BAR2B)}<Slot $w={14}><Tri $s={5} $c="#888" /></Slot>
      </ToolBar>

      <Main>
        <SideTools>
          <GripH $h={11} />
          {SIDE1.map((n, i) => <SideSlot key={i} $drop={n === "blobMove" || n === "rotSym"}><Icon n={n} s={24} />{(n === "blobMove" || n === "rotSym") && <Tri $s={5} $c="#999" />}</SideSlot>)}
          <GripH $h={18} />
          {["topology", "tblRef", "swirl"].map((n) => <SideSlot key={n}><Icon n={n} /></SideSlot>)}
          <GripH $h={17} />
          {["dtri", "globeAdd", "globeFind", "globeBino"].map((n) => <SideSlot key={n} $drop={n === "globeAdd"}><Icon n={n} /></SideSlot>)}
        </SideTools>

        <LeftDocks>
          <DockTitle>Layer<DockButtons /></DockTitle>
          <MiniBar>
            <Slot $w={24} $h={24} $on><Icon n="brush" s={17} /></Slot>
            {["addGroup", "eye", "funnel", "epsF"].map((n) => <Slot key={n} $w={25.5}><Icon n={n} s={16} /></Slot>)}
            <Slot $w={14}><Tri $s={5} /></Slot>
            {["expand", "collapse", "removeL"].map((n) => <Slot key={n} $w={25}><Icon n={n} s={16} /></Slot>)}
          </MiniBar>
          <Tree $h={259}>
            <TreeRow $sel><TreeArrow><Tri $d="r" /></TreeArrow><Check /><Gap $w={6} /><Icon n="layerPoly" s={14} w={20} /><TreeText $b>province_g</TreeText></TreeRow>
          </Tree>
          <GripH $h={7} $thin />
          <DockTitle>Browser<DockButtons /></DockTitle>
          <MiniBar $h={30}>{["addL", "refresh", "funnel", "collapse", "infoR"].map((n) => <Slot key={n} $w={25}><Icon n={n} s={15} /></Slot>)}</MiniBar>
          <Tree>
            {BROWSER.map(([ic, t, no], i) => <TreeRow key={i}><TreeArrow $hide={no}><Tri $d="r" /></TreeArrow><Icon n={ic} s={19} w={20} /><TreeText>{t}</TreeText></TreeRow>)}
          </Tree>
        </LeftDocks>

        <Center>
          <Canvas><Italy /></Canvas>
          <GripH $h={8} $thin />
          <DockTitle $h={21} $pr={2} $ls={-0.1}>province_g :: Totale degli elementi: 107, Filtrati: 107, Selezionati: 0<DockButtons /></DockTitle>
          <MiniBar $h={29} $pl={2.5}>
            {TBAR.map((t, i) => typeof t === "number" ? <Sep key={i} $w={t} /> : t[0] === "!" ? <Slot key={i} $on $w={25} $h={23}><Icon n="dock" s={15} /></Slot> : <Slot key={i} $w={25} $h={24}><Icon n={t} s={15} /></Slot>)}
          </MiniBar>
          <TableBox>
            <Grid>
              <GRow $h={22}>
                <HCell />{["PK_UID", "COD_RIP", "COD_REG", "COD_PROV", "COD_CM", "COD_PCM"].map((h) => <HCell key={h} $sorted={h === "COD_REG"}>{h}{h === "COD_REG" && <SortMark><Tri $d="u" $s={5} $c="#333" /></SortMark>}</HCell>)}<HCell $left>DEN_P</HCell>
              </GRow>
              {DATA.map((r, i) => <GRow key={i} $alt={i % 2 === 1}><RowHead>{i + 1}</RowHead>{r.map((c, j) => <Cell key={j} $left={j === 6}>{c}</Cell>)}</GRow>)}
            </Grid>
            <VScroll>
              <SBtn $b="border-bottom:1px solid #bbb"><Tri $d="u" $s={4.5} /></SBtn>
              <SBtn $h={37} $b="border-bottom:1px solid #bbb" /><Spacer /><SBtn $b="border-top:1px solid #bbb"><Tri $s={4.5} /></SBtn>
            </VScroll>
            <Highlight $x={284} $y={-3} $w={123} $h={431} />
          </TableBox>
          <HScroll>
            <SBtn $b="border-right:1px solid #bbb"><Tri $d="l" $s={4.5} /></SBtn><SBtn $w={486} $b="border-right:1px solid #bbb" /><Spacer /><SBtn $w={18} $b="border-left:1px solid #bbb"><Tri $d="r" $s={4.5} /></SBtn><SBtn $w={17} $b="border-left:1px solid #bbb" />
          </HScroll>
          <BottomRow>
            <Button $w={187} $start><Icon n="funnel" s={18} />Mostra tutti gli elementi<Corner><Tri $s={4.5} /></Corner></Button>
            <Spacer /><Button $w={28}><Icon n="form" s={17} /></Button><Button $w={28} $on><Icon n="table" s={18} /></Button>
          </BottomRow>
        </Center>

        <StyleDock>
          <DockTitle $pl={1} $pr={-1}>Stile layer<DockButtons /></DockTitle>
          <Line $h={30}><Combo><Icon n="layerGrey" s={14} w={19} />province_g<Spacer /><Tri /></Combo></Line>
          <DockBody>
            <DarkStrip>
              <StripItem><Icon n="brush" s={22} /></StripItem><StripItem $on><Icon n="tagG" s={21} /></StripItem>
              <StripItem><Icon n="cube" s={22} /></StripItem><StripItem><Icon n="blocks" s={22} /></StripItem><StripItem><Icon n="history" s={20} /></StripItem>
            </DarkStrip>
            <Form>
              <Line $h={28}><Combo><Icon n="tagS" s={18} />Etichette singole<Spacer /><Tri /></Combo><Gap $w={7} /><Button $w={36} $h={25}><Icon n="engine" s={19} /></Button></Line>
              <Line $h={28} $mt={6}>
                <Lbl $w={85}>Etichetta con</Lbl><Combo $white $pl={2} $ls={-0.5}><TabText>123</TabText>COD_REG<Spacer /><Tri /></Combo><Gap $w={8} /><Button $w={27} $h={28}><Icon n="eps" s={20} /></Button>
              </Line>
              <Tabs>
                <Tab $first><TabText>abc</TabText></Tab><Tab><TabText $small>{"+ab\n< c"}</TabText></Tab><Tab><TabText $halo>abc</TabText></Tab>
                <Tab><Icon n="shield" s={18} /></Tab><Tab><Icon n="shadow" s={18} /></Tab><Tab $on><Icon n="place" s={18} /></Tab><Tab><Icon n="paint" s={17} /></Tab>
              </Tabs>
              <Line $mt={12} $h={28} $pl={6}>Posizionamento</Line>
              <RadioGrid>
                {[["Offset dal centroide", 1], ["Orizzontale (lento)"], ["Attorno al centroide"], ["Libero (lento)"], ["Usando il perimetro"]].map(([t, on]) => <Radio key={t}><RadioDot $on={on} />{t}</Radio>)}
              </RadioGrid>
              <Line $mt={13} $h={30} $pl={6} $pr={8}><Lbl $w={69}>Centroide</Lbl><RadioDot $on />poligono visibile<Spacer /><Override /></Line>
              <Line $mt={3} $h={28} $pl={74}><Check on={false} /><Gap $w={7} />Forza punto all'int</Line>
              <Line $mt={4} $h={79} $pl={6} ><Lbl $w={72}>Quadrante</Lbl>
                <Quad>{[0, 1, 2, 3, 4, 5, 6, 7, 8].map((i) => <QBtn key={i} $on={i === 0}><TagGrey ball={i === 4} /></QBtn>)}</Quad>
              </Line>
              <Line $mt={8} $h={24} $pl={6} $pr={8}><Lbl $w={65} $ls={-0.1}>Offset X,Y</Lbl><Spin>0,0000</Spin><Gap $w={10} /><Override /></Line>
              <Line $mt={15} $h={26} $pl={71} $pr={8}><Combo $h={26} $pl={4}>Millimetri<Spacer /><Tri /></Combo><Gap $w={10} /><Override /></Line>
              <Line $mt={8} $h={24} $pl={6} $pr={6}><Lbl $w={68}>Rotazione</Lbl><Spin>0,00°</Spin></Line>
              <Rule />
              <Line $mt={13} $h={25} $pl={8}><Tri $s={5.5} $c="#333" /><Gap $w={8} /><Lbl $b $ls={-0.05}>Definito dai dati</Lbl></Line>
              <Group $h={122}>
                <Line $mt={8} $h={34}><Lbl $w={91}>Coordinata</Lbl><Lbl $w={17}>X</Lbl><Override e /><Gap $w={9} /><Lbl $w={16}>Y</Lbl><Override e /></Line>
                <Line $h={34}><Lbl $w={91} $ls={0.1}>Allineamento</Lbl><Lbl $w={78} $ls={0.3}>orizzontale</Lbl><Override /><Gap $w={9} /><Lbl $w={62}>verticale</Lbl><Override /></Line>
                <Line $h={35}><Lbl $w={94}>Rotazione</Lbl><Override /><Gap $w={21} /><Check /><Gap $w={7} />Mantieni i valori di rotazione</Line>
              </Group>
              <Line $mt={5} $h={24} $pl={8}><Tri $s={5.5} $c="#333" /><Gap $w={8} /><Lbl $b $ls={-0.1}>Priorità</Lbl></Line>
              <Group $h={54}>
                <Line $h={52}>
                  <Lbl $w={41}>Bassa</Lbl>
                  <SliderWrap><Track><Knob /></Track><Ticks>{[...Array(11)].map((_, i) => <Tick key={i} />)}</Ticks></SliderWrap>
                  <Gap $w={7} /><Lbl $w={34}>Alta</Lbl><Override />
                </Line>
              </Group>
              <Spacer />
              <Line $h={27}>
                <Button $w={28}><Icon n="undoO" s={15} /></Button><Gap $w={6} /><Button $w={28}><Icon n="redoGr" s={15} /></Button>
                <Spacer /><Check /><Gap $w={7} /><Lbl $w={178} $ls={0.45}>Aggiornamento immediato</Lbl><Button $w={80}>Applica</Button>
              </Line>
            </Form>
          </DockBody>
        </StyleDock>
      </Main>

      <Status>
        <Field $w={310} $h={26} $pl={9} $c="#858585" $ls={0.3}><Icon n="search" s={12} />Digita per localizzare (Ctrl+K)</Field><Gap $w={7} />
        <Lbl $w={564} $ls={0.35}>1 voce in legenda eliminata.</Lbl>
        <Lbl $w={72} $ls={0.3}>Coordinate</Lbl><Field $w={118} $ls={-0.42}>2376672,3922569</Field><Gap $w={3} /><Icon n="mouse" s={20} /><Gap $w={13} />
        <Lbl $w={35}>Scala</Lbl><Combo $w={92} $h={25} $white $pl={2} $pr={9} $ls={-0.55}>.:16447743<Spacer /><Tri $s={4.5} /></Combo><Gap $w={11} />
        <Icon n="lock" s={19} w={17} /><Gap $w={9} /><Lbl $w={144} $ls={0.45}>Lente d'ingrandimento</Lbl><Spin $w={93}>100%</Spin><Gap $w={9} />
        <Lbl $w={71} $ls={0.3}>Rotazione</Lbl><Spin $w={88}>0,0 °</Spin><Gap $w={6} /><Check /><Gap $w={7} /><Lbl $w={79} $ls={0.3}>Visualizza</Lbl>
        <Icon n="globeDark" s={18} /><Gap $w={5} /><Lbl $w={82} $ls={-0.2}>EPSG:3003</Lbl><Icon n="chat" s={20} />
      </Status>
      <Strip />

      <Highlight $x={1321} $y={216} $w={111} $h={41} />
      <Popup>
        {POP.map((p, i) => {
          if (!p) return <PopRule key={i} />;
          const f = p[1] || "";
          return (
            <PopItem key={i} $head={f === "h"} $b={f === "b"}>
              <PopMark>{(f[0] === "c" || f === "x") && <Check s={18} on={f === "x"} />}</PopMark>{p[0]}{f === "ca" && <><Spacer /><Tri $d="r" $s={4.5} /></>}
            </PopItem>
          );
        })}
      </Popup>
      <Overlay width="1920" height="1080">
        <g fill="#d96245">
          <path d="M1085 224H1158L1128 190H1160L1205 236L1160 282H1128L1158 249H1085z" />
          <path d="M1536.500 196h12v35l17-14v15l-23 23-23-23v-15l17 14z" />
          <path d="M1367 700L1356 711L1391 744H1361L1374 759H1415V717L1401 704V733z" />
        </g>
        <Watermark transform="translate(744 657) rotate(-24.600)" textLength="483" lengthAdjust="spacingAndGlyphs">Pigrecoinfinito</Watermark>
      </Overlay>
    </Window>
  );
}
